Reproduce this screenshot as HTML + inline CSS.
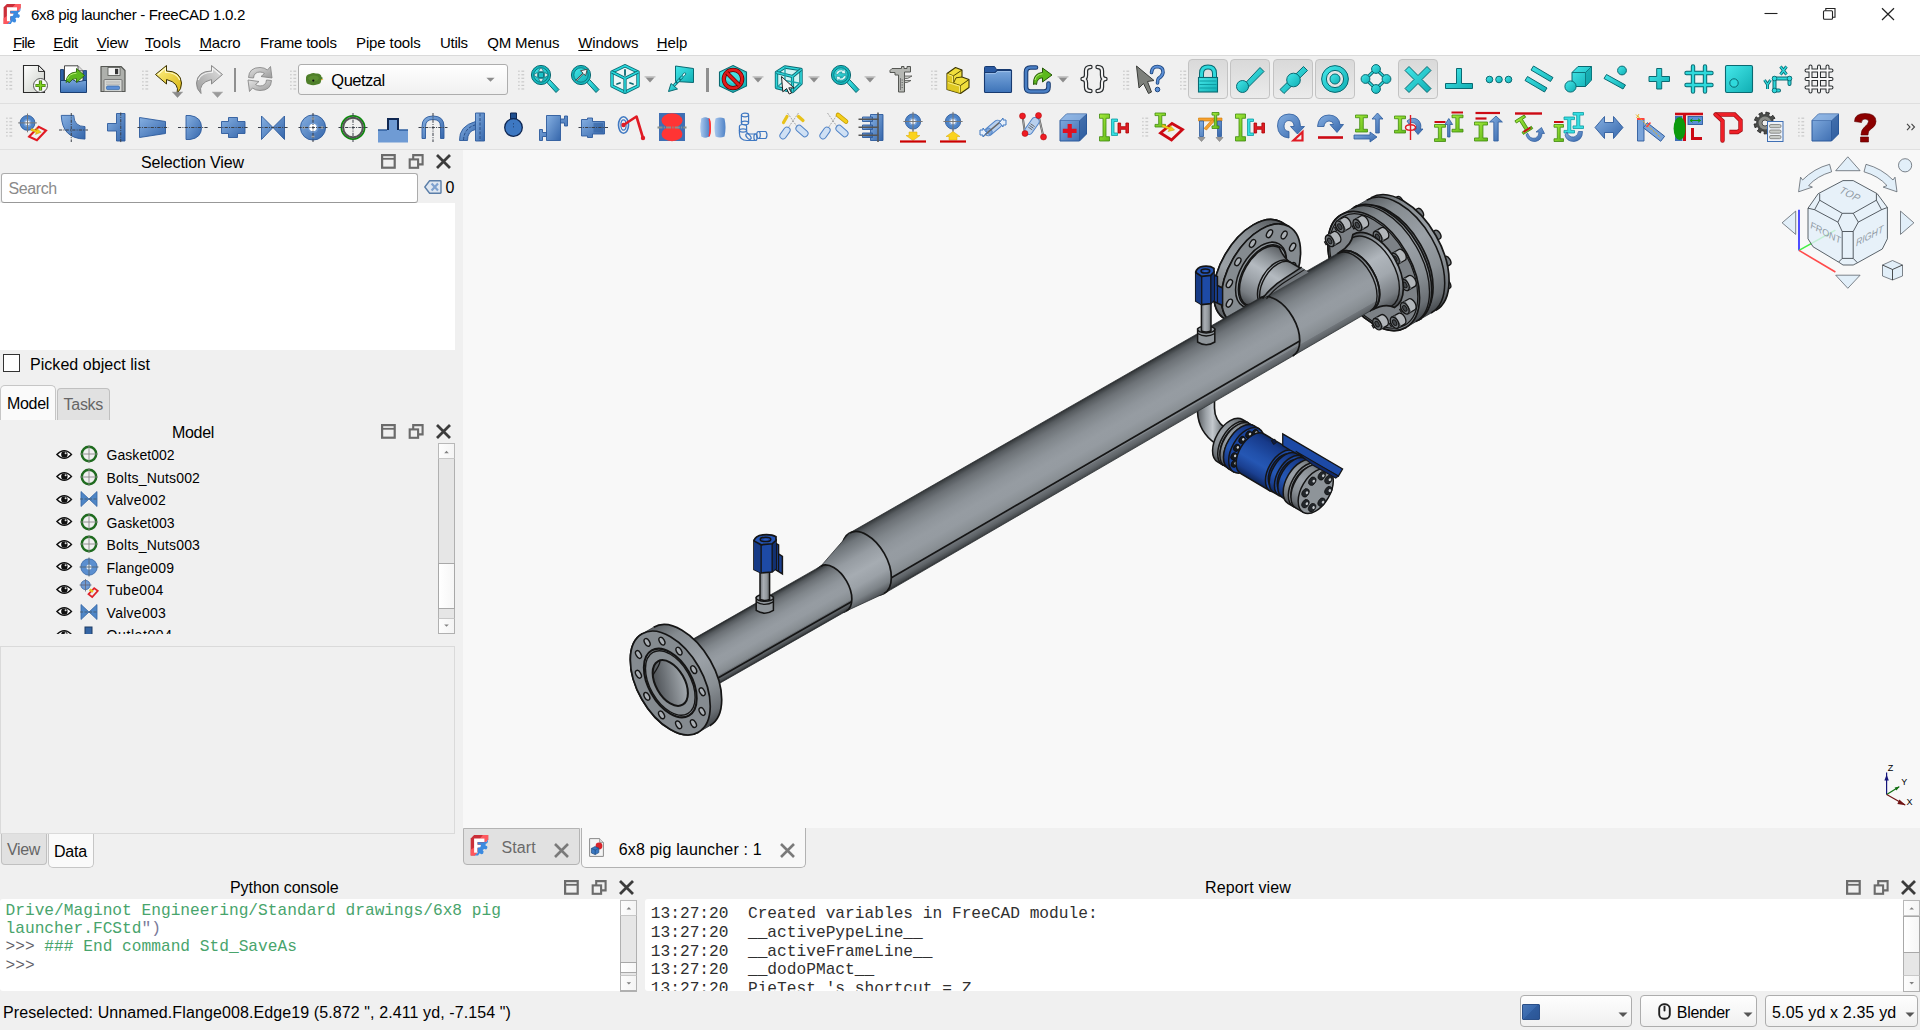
<!DOCTYPE html>
<html lang="en"><head><meta charset="utf-8"><title>6x8 pig launcher - FreeCAD 1.0.2</title>
<style>
html,body{margin:0;padding:0;}
body{width:1920px;height:1030px;overflow:hidden;background:#f0f0f0;position:relative;font-family:"Liberation Sans",sans-serif;}
.t{position:absolute;white-space:pre;}
.b{position:absolute;box-sizing:border-box;}
svg{position:absolute;overflow:visible;}
u{text-decoration:underline;text-underline-offset:2px;text-decoration-thickness:1px;}
</style></head><body>
<div class="b" style="left:0px;top:0px;width:1920px;height:55px;background:#fff;"></div>
<div class="b" style="left:0px;top:55px;width:1920px;height:1px;background:#dadada;"></div>
<svg style="left:0px;top:0px" width="24" height="28" viewBox="0 0 24 28">
<path d="M3.6 7.3L6.9 4H20.6V8L7.6 23.9H3.6Z" fill="#cb2f39"/>
<path d="M15.4 4H20.6V8.2L17 12.4V7.2H12.6Z" fill="#ff5a60"/>
<path d="M3.6 18.2L6.9 16V21L9.6 21.4 7.6 23.9H3.6Z" fill="#ff565c"/>
<path d="M6.9 7.3H17V10.8H10.2V13.4H14V16.4H10.2V21.2H6.9Z" fill="#fff"/>
<path d="M20.6 7.8L19.2 10.8 17.6 10.4 16.6 11 10.4 11V13.2H13.6L13 15.8 10.4 16.2V21.4L7.4 23.9H10.8L12.2 21.6 14 22.6 15.6 22.2 16.2 20 15.2 18.4 16.8 17.6 18.6 18 19.8 16.6 19.6 14.8 18 14 18.2 12.4 19.6 11.8 20.4 10.4Z" fill="#3b8ae0"/>
</svg>
<div class="t" id="title" style="left:31px;top:6.72px;font-size:15.1px;line-height:15.1px;font-family:'Liberation Sans',sans-serif;color:#000;letter-spacing:-0.339px;">6x8 pig launcher - FreeCAD 1.0.2</div>
<svg style="left:1750px;top:0" width="170" height="29" viewBox="0 0 170 29">
<path d="M14.5 13.5H27.5" stroke="#222" stroke-width="1.1"/>
<path d="M75.8 10.5V8.5H85V17.2H82.8" fill="none" stroke="#222" stroke-width="1.1"/>
<rect x="73.5" y="10.7" width="9" height="8.6" rx="1" fill="none" stroke="#222" stroke-width="1.1"/>
<path d="M132 8.3L144 20M144 8.3L132 20" stroke="#222" stroke-width="1.2"/>
</svg>
<div class="t" id="menu0" style="left:13px;top:34.60px;font-size:15px;line-height:15px;font-family:'Liberation Sans',sans-serif;color:#000;letter-spacing:-0.620px;"><u>F</u>ile</div>
<div class="t" id="menu1" style="left:53.3px;top:34.60px;font-size:15px;line-height:15px;font-family:'Liberation Sans',sans-serif;color:#000;letter-spacing:-0.291px;"><u>E</u>dit</div>
<div class="t" id="menu2" style="left:96.7px;top:34.60px;font-size:15px;line-height:15px;font-family:'Liberation Sans',sans-serif;color:#000;letter-spacing:-0.163px;"><u>V</u>iew</div>
<div class="t" id="menu3" style="left:145px;top:34.60px;font-size:15px;line-height:15px;font-family:'Liberation Sans',sans-serif;color:#000;letter-spacing:0.155px;"><u>T</u>ools</div>
<div class="t" id="menu4" style="left:199.5px;top:34.60px;font-size:15px;line-height:15px;font-family:'Liberation Sans',sans-serif;color:#000;letter-spacing:-0.138px;"><u>M</u>acro</div>
<div class="t" id="menu5" style="left:260px;top:34.60px;font-size:15px;line-height:15px;font-family:'Liberation Sans',sans-serif;color:#000;letter-spacing:-0.227px;">Frame tools</div>
<div class="t" id="menu6" style="left:356px;top:34.60px;font-size:15px;line-height:15px;font-family:'Liberation Sans',sans-serif;color:#000;letter-spacing:-0.118px;">Pipe tools</div>
<div class="t" id="menu7" style="left:440px;top:34.60px;font-size:15px;line-height:15px;font-family:'Liberation Sans',sans-serif;color:#000;letter-spacing:-0.296px;">Utils</div>
<div class="t" id="menu8" style="left:487.3px;top:34.60px;font-size:15px;line-height:15px;font-family:'Liberation Sans',sans-serif;color:#000;letter-spacing:-0.170px;">QM Menus</div>
<div class="t" id="menu9" style="left:578.3px;top:34.60px;font-size:15px;line-height:15px;font-family:'Liberation Sans',sans-serif;color:#000;letter-spacing:-0.125px;"><u>W</u>indows</div>
<div class="t" id="menu10" style="left:656.7px;top:34.60px;font-size:15px;line-height:15px;font-family:'Liberation Sans',sans-serif;color:#000;letter-spacing:-0.066px;"><u>H</u>elp</div>
<div class="b" style="left:0px;top:56px;width:1920px;height:47px;background:#f0f0f0;"></div>
<div class="b" style="left:0px;top:102.6px;width:1920px;height:2.2px;background:linear-gradient(#e6e6e6,#d6d6d6 60%,#e4e4e4);"></div>
<div class="b" style="left:0px;top:104px;width:1920px;height:45px;background:#f0f0f0;"></div>
<div class="b" style="left:0px;top:149px;width:1920px;height:1px;background:#e0e0e0;"></div>
<div class="b" style="left:463px;top:150px;width:1457px;height:678px;background:#f8f8f8;"></div>
<div class="t" id="selview" style="left:141px;top:155.46px;font-size:16px;line-height:16px;font-family:'Liberation Sans',sans-serif;color:#000;letter-spacing:-0.119px;">Selection View</div>
<svg style="left:381px;top:154px" width="72" height="16" viewBox="0 0 72 16"><rect x="1.1" y="1.1" width="12.6" height="12.6" fill="none" stroke="#6b6b6b" stroke-width="2.2"/><rect x="1.1" y="3.9" width="12.6" height="1.8" fill="#6b6b6b"/><path d="M32.2 5.2V1.1H41.6V10.4H37.8" fill="none" stroke="#6b6b6b" stroke-width="2.1"/><rect x="28.7" y="5.4" width="8.4" height="8.4" fill="none" stroke="#6b6b6b" stroke-width="2.1"/><path d="M56 1L69 14M69 1L56 14" fill="none" stroke="#3c3c3c" stroke-width="2.8"/></svg>
<div class="b" style="left:0.5px;top:173.4px;width:417px;height:29.2px;background:#fff;border:1.3px solid #acacac;border-bottom-color:#989898;border-radius:3px;"></div>
<div class="t" id="search" style="left:8.5px;top:180.76px;font-size:16px;line-height:16px;font-family:'Liberation Sans',sans-serif;color:#8a8a8a;letter-spacing:-0.416px;">Search</div>
<svg style="left:424px;top:180px" width="18" height="15" viewBox="0 0 18 15">
<path d="M5.6 0.8H16.4Q17 0.8 17 1.4V12.6Q17 13.2 16.4 13.2H5.6L0.8 7Z" fill="#dfe7f1" stroke="#5b7ea8" stroke-width="1.4" stroke-linejoin="round"/>
<path d="M7.6 3.6L14 10.4M14 3.6L7.6 10.4" stroke="#7fa2cf" stroke-width="2.2"/>
</svg>
<div class="t" id="selcount" style="left:445.5px;top:180.16px;font-size:16px;line-height:16px;font-family:'Liberation Sans',sans-serif;color:#000;letter-spacing:-0.906px;">0</div>
<div class="b" style="left:0px;top:203px;width:455px;height:147px;background:#fff;"></div>
<div class="b" style="left:2.5px;top:354px;width:17.5px;height:17.5px;background:#fff;border:1.6px solid #333;"></div>
<div class="t" id="picked" style="left:30px;top:357.16px;font-size:16px;line-height:16px;font-family:'Liberation Sans',sans-serif;color:#000;letter-spacing:0.046px;">Picked object list</div>
<div class="b" style="left:57px;top:388px;width:53px;height:32px;background:#e1e1e1;border:1px solid #c0c0c0;border-bottom:none;border-radius:4px 4px 0 0;"></div>
<div class="b" style="left:0px;top:384.5px;width:55.5px;height:35.5px;background:#fafafa;border:1px solid #c6c6c6;border-bottom:none;border-radius:5px 5px 0 0;"></div>
<div class="t" id="tabmodel" style="left:7px;top:396.16px;font-size:16px;line-height:16px;font-family:'Liberation Sans',sans-serif;color:#000;letter-spacing:-0.316px;">Model</div>
<div class="t" id="tabtasks" style="left:63.6px;top:397.16px;font-size:16px;line-height:16px;font-family:'Liberation Sans',sans-serif;color:#666;letter-spacing:-0.301px;">Tasks</div>
<div class="t" id="modeltitle" style="left:172px;top:424.96px;font-size:16px;line-height:16px;font-family:'Liberation Sans',sans-serif;color:#000;letter-spacing:-0.316px;">Model</div>
<svg style="left:381px;top:424px" width="72" height="16" viewBox="0 0 72 16"><rect x="1.1" y="1.1" width="12.6" height="12.6" fill="none" stroke="#6b6b6b" stroke-width="2.2"/><rect x="1.1" y="3.9" width="12.6" height="1.8" fill="#6b6b6b"/><path d="M32.2 5.2V1.1H41.6V10.4H37.8" fill="none" stroke="#6b6b6b" stroke-width="2.1"/><rect x="28.7" y="5.4" width="8.4" height="8.4" fill="none" stroke="#6b6b6b" stroke-width="2.1"/><path d="M56 1L69 14M69 1L56 14" fill="none" stroke="#3c3c3c" stroke-width="2.8"/></svg><div class="b" style="left:0;top:443px;width:438px;height:191px;overflow:hidden;">
<svg style="left:55.8px;top:5.699999999999989px" width="16.4" height="11" viewBox="0 0 18 12"><path d="M1 6Q9 -2.6 17 6Q9 14.6 1 6Z" fill="#fff" stroke="#111" stroke-width="1.5"/><circle cx="9.2" cy="6" r="3.5" fill="#111"/><circle cx="10.6" cy="4.6" r="1.1" fill="#ddd"/></svg>
<svg style="left:79px;top:1.1999999999999886px" width="20" height="20" viewBox="0 0 20 20"><circle cx="10" cy="10" r="7.2" fill="#f0f0f0" stroke="#1f6b1f" stroke-width="2.4"/><path d="M10 1V19M1 10H19" stroke="#888" stroke-width="0.9"/></svg>
<div class="t" id="tree0" style="left:106.6px;top:5.15px;font-size:14px;line-height:14px;font-family:'Liberation Sans',sans-serif;color:#000;letter-spacing:0.031px;">Gasket002</div>
<svg style="left:55.8px;top:28.19999999999999px" width="16.4" height="11" viewBox="0 0 18 12"><path d="M1 6Q9 -2.6 17 6Q9 14.6 1 6Z" fill="#fff" stroke="#111" stroke-width="1.5"/><circle cx="9.2" cy="6" r="3.5" fill="#111"/><circle cx="10.6" cy="4.6" r="1.1" fill="#ddd"/></svg>
<svg style="left:79px;top:23.69999999999999px" width="20" height="20" viewBox="0 0 20 20"><circle cx="10" cy="10" r="7.2" fill="#f0f0f0" stroke="#1f6b1f" stroke-width="2.4"/><path d="M10 1V19M1 10H19" stroke="#888" stroke-width="0.9"/></svg>
<div class="t" id="tree1" style="left:106.6px;top:27.65px;font-size:14px;line-height:14px;font-family:'Liberation Sans',sans-serif;color:#000;letter-spacing:0.188px;">Bolts_Nuts002</div>
<svg style="left:55.8px;top:50.69999999999999px" width="16.4" height="11" viewBox="0 0 18 12"><path d="M1 6Q9 -2.6 17 6Q9 14.6 1 6Z" fill="#fff" stroke="#111" stroke-width="1.5"/><circle cx="9.2" cy="6" r="3.5" fill="#111"/><circle cx="10.6" cy="4.6" r="1.1" fill="#ddd"/></svg>
<svg style="left:79px;top:46.19999999999999px" width="20" height="20" viewBox="0 0 20 20"><path d="M2 2.5V17.5L10 10ZM18 2.5V17.5L10 10Z" fill="#4f86c6" stroke="#3465a4" stroke-width="0.8"/><path d="M1 10H19" stroke="#456" stroke-width="0.8" stroke-dasharray="3 1.5"/></svg>
<div class="t" id="tree2" style="left:106.6px;top:50.15px;font-size:14px;line-height:14px;font-family:'Liberation Sans',sans-serif;color:#000;letter-spacing:0.270px;">Valve002</div>
<svg style="left:55.8px;top:73.20000000000005px" width="16.4" height="11" viewBox="0 0 18 12"><path d="M1 6Q9 -2.6 17 6Q9 14.6 1 6Z" fill="#fff" stroke="#111" stroke-width="1.5"/><circle cx="9.2" cy="6" r="3.5" fill="#111"/><circle cx="10.6" cy="4.6" r="1.1" fill="#ddd"/></svg>
<svg style="left:79px;top:68.70000000000005px" width="20" height="20" viewBox="0 0 20 20"><circle cx="10" cy="10" r="7.2" fill="#f0f0f0" stroke="#1f6b1f" stroke-width="2.4"/><path d="M10 1V19M1 10H19" stroke="#888" stroke-width="0.9"/></svg>
<div class="t" id="tree3" style="left:106.6px;top:72.65px;font-size:14px;line-height:14px;font-family:'Liberation Sans',sans-serif;color:#000;letter-spacing:0.031px;">Gasket003</div>
<svg style="left:55.8px;top:95.70000000000005px" width="16.4" height="11" viewBox="0 0 18 12"><path d="M1 6Q9 -2.6 17 6Q9 14.6 1 6Z" fill="#fff" stroke="#111" stroke-width="1.5"/><circle cx="9.2" cy="6" r="3.5" fill="#111"/><circle cx="10.6" cy="4.6" r="1.1" fill="#ddd"/></svg>
<svg style="left:79px;top:91.20000000000005px" width="20" height="20" viewBox="0 0 20 20"><circle cx="10" cy="10" r="7.2" fill="#f0f0f0" stroke="#1f6b1f" stroke-width="2.4"/><path d="M10 1V19M1 10H19" stroke="#888" stroke-width="0.9"/></svg>
<div class="t" id="tree4" style="left:106.6px;top:95.15px;font-size:14px;line-height:14px;font-family:'Liberation Sans',sans-serif;color:#000;letter-spacing:0.188px;">Bolts_Nuts003</div>
<svg style="left:55.8px;top:118.20000000000005px" width="16.4" height="11" viewBox="0 0 18 12"><path d="M1 6Q9 -2.6 17 6Q9 14.6 1 6Z" fill="#fff" stroke="#111" stroke-width="1.5"/><circle cx="9.2" cy="6" r="3.5" fill="#111"/><circle cx="10.6" cy="4.6" r="1.1" fill="#ddd"/></svg>
<svg style="left:79px;top:113.70000000000005px" width="20" height="20" viewBox="0 0 20 20"><circle cx="10" cy="10" r="8.2" fill="#5b8fd0" stroke="#3465a4" stroke-width="0.8"/><circle cx="10" cy="10" r="2.6" fill="#e8eef6"/><path d="M10 0.5V19.5M0.5 10H19.5" stroke="#567" stroke-width="0.9"/></svg>
<div class="t" id="tree5" style="left:106.6px;top:117.65px;font-size:14px;line-height:14px;font-family:'Liberation Sans',sans-serif;color:#000;letter-spacing:0.148px;">Flange009</div>
<svg style="left:55.8px;top:140.70000000000005px" width="16.4" height="11" viewBox="0 0 18 12"><path d="M1 6Q9 -2.6 17 6Q9 14.6 1 6Z" fill="#fff" stroke="#111" stroke-width="1.5"/><circle cx="9.2" cy="6" r="3.5" fill="#111"/><circle cx="10.6" cy="4.6" r="1.1" fill="#ddd"/></svg>
<svg style="left:79px;top:136.20000000000005px" width="20" height="20" viewBox="0 0 20 20"><circle cx="6.5" cy="6" r="4.6" fill="#6f9bd4" stroke="#3465a4" stroke-width="0.8"/><path d="M6.5 0V12.5M0.5 6H12.5" stroke="#667" stroke-width="0.8"/><path d="M9.5 15.2L15.2 9.2 18.8 11.8 13.2 18Z" fill="none" stroke="#e0222a" stroke-width="1.7"/><path d="M10.6 10.4L14 12.8" stroke="#e8c21a" stroke-width="2.4"/></svg>
<div class="t" id="tree6" style="left:106.6px;top:140.15px;font-size:14px;line-height:14px;font-family:'Liberation Sans',sans-serif;color:#000;letter-spacing:0.321px;">Tube004</div>
<svg style="left:55.8px;top:163.20000000000005px" width="16.4" height="11" viewBox="0 0 18 12"><path d="M1 6Q9 -2.6 17 6Q9 14.6 1 6Z" fill="#fff" stroke="#111" stroke-width="1.5"/><circle cx="9.2" cy="6" r="3.5" fill="#111"/><circle cx="10.6" cy="4.6" r="1.1" fill="#ddd"/></svg>
<svg style="left:79px;top:158.70000000000005px" width="20" height="20" viewBox="0 0 20 20"><path d="M2 2.5V17.5L10 10ZM18 2.5V17.5L10 10Z" fill="#4f86c6" stroke="#3465a4" stroke-width="0.8"/><path d="M1 10H19" stroke="#456" stroke-width="0.8" stroke-dasharray="3 1.5"/></svg>
<div class="t" id="tree7" style="left:106.6px;top:162.65px;font-size:14px;line-height:14px;font-family:'Liberation Sans',sans-serif;color:#000;letter-spacing:0.270px;">Valve003</div>
<svg style="left:55.8px;top:185.70000000000005px" width="16.4" height="11" viewBox="0 0 18 12"><path d="M1 6Q9 -2.6 17 6Q9 14.6 1 6Z" fill="#fff" stroke="#111" stroke-width="1.5"/><circle cx="9.2" cy="6" r="3.5" fill="#111"/><circle cx="10.6" cy="4.6" r="1.1" fill="#ddd"/></svg>
<svg style="left:79px;top:181.20000000000005px" width="20" height="20" viewBox="0 0 20 20"><rect x="6" y="3" width="7" height="10" fill="#3465a4" stroke="#1d3b63" stroke-width="1"/></svg>
<div class="t" id="tree8" style="left:106.6px;top:185.15px;font-size:14px;line-height:14px;font-family:'Liberation Sans',sans-serif;color:#000;letter-spacing:0.587px;">Outlet004</div>
</div>
<div class="b" style="left:438px;top:443.4px;width:17px;height:190.2px;background:#e6e6e6;border:1px solid #b0b0b0;"></div><div class="b" style="left:438px;top:443.4px;width:17px;height:16px;background:linear-gradient(90deg,#fdfdfd,#f4f4f4);border:1px solid #b8b8b8;border-bottom-color:#c8c8c8;"></div><div class="b" style="left:438px;top:617.5999999999999px;width:17px;height:16px;background:linear-gradient(90deg,#fdfdfd,#f4f4f4);border:1px solid #b0b0b0;border-top-color:#c8c8c8;"></div><div class="b" style="left:438px;top:563.3px;width:17px;height:46.10000000000002px;background:linear-gradient(90deg,#ffffff,#f6f6f6);border:1px solid #a8a8a8;"></div><svg style="left:0;top:0" width="1" height="1"><path d="M444.2 453.2L446.5 450.79999999999995L448.8 453.2Z" fill="#808080"/><path d="M444.2 624.3999999999999L446.5 626.8L448.8 624.3999999999999Z" fill="#808080"/></svg>
<div class="b" style="left:0px;top:645.5px;width:455px;height:188.5px;background:#f0f0f0;border:1px solid #dadada;"></div>
<div class="b" style="left:0.5px;top:834px;width:46px;height:30.5px;background:#e1e1e1;border:1px solid #c0c0c0;border-top:none;border-radius:0 0 4px 4px;"></div>
<div class="b" style="left:48px;top:833.5px;width:45.5px;height:34.5px;background:#fafafa;border:1px solid #c6c6c6;border-top:none;border-radius:0 0 5px 5px;"></div>
<div class="t" id="tabview" style="left:7px;top:841.66px;font-size:16px;line-height:16px;font-family:'Liberation Sans',sans-serif;color:#666;letter-spacing:-0.348px;">View</div>
<div class="t" id="tabdata" style="left:54px;top:844.16px;font-size:16px;line-height:16px;font-family:'Liberation Sans',sans-serif;color:#000;letter-spacing:-0.203px;">Data</div><div class="b" style="left:463.3px;top:828px;width:116.5px;height:36.6px;background:#e1e1e1;border:1px solid #b4b4b4;border-radius:0 0 4px 4px;"></div>
<div class="b" style="left:580.8px;top:828px;width:224.8px;height:40.3px;background:#f8f8f8;border:1px solid #b2b2b2;border-top:none;border-radius:0 0 5px 5px;"></div>
<svg style="left:466.7px;top:830.6px" width="24.7" height="28.8" viewBox="0 0 24 28">
<path d="M3.6 7.3L6.9 4H20.6V8L7.6 23.9H3.6Z" fill="#cb2f39"/>
<path d="M15.4 4H20.6V8.2L17 12.4V7.2H12.6Z" fill="#ff5a60"/>
<path d="M3.6 18.2L6.9 16V21L9.6 21.4 7.6 23.9H3.6Z" fill="#ff565c"/>
<path d="M6.9 7.3H17V10.8H10.2V13.4H14V16.4H10.2V21.2H6.9Z" fill="#fff"/>
<path d="M20.6 7.8L19.2 10.8 17.6 10.4 16.6 11 10.4 11V13.2H13.6L13 15.8 10.4 16.2V21.4L7.4 23.9H10.8L12.2 21.6 14 22.6 15.6 22.2 16.2 20 15.2 18.4 16.8 17.6 18.6 18 19.8 16.6 19.6 14.8 18 14 18.2 12.4 19.6 11.8 20.4 10.4Z" fill="#3b8ae0"/>
</svg>
<div class="t" id="tabstart" style="left:501.5px;top:840.16px;font-size:16px;line-height:16px;font-family:'Liberation Sans',sans-serif;color:#6a6a6a;letter-spacing:0.102px;">Start</div>
<svg style="left:554px;top:842.7px" width="15" height="15" viewBox="0 0 15 15"><path d="M1 1L14 14M14 1L1 14" stroke="#7a7a7a" stroke-width="2.6"/></svg>
<svg style="left:589px;top:838px" width="15" height="19" viewBox="0 0 15 19">
<path d="M0.6 0.6H10.6L14.4 4.4V18.4H0.6Z" fill="#f4f4f4" stroke="#8a8a8a" stroke-width="1"/>
<path d="M10.6 0.6V4.4H14.4" fill="#ddd" stroke="#8a8a8a" stroke-width="0.8"/>
<circle cx="10" cy="8" r="3.4" fill="#d8232a"/>
<path d="M2.4 10.4L6 8.6 9.8 10.2V14.6L6.2 16.6 2.4 15Z" fill="#3a78c2" stroke="#1f4a80" stroke-width="0.7"/>
<path d="M2.4 10.4L6.2 12 9.8 10.2M6.2 12V16.6" fill="none" stroke="#1f4a80" stroke-width="0.7"/>
</svg>
<div class="t" id="tabdoc" style="left:618.7px;top:842.36px;font-size:16px;line-height:16px;font-family:'Liberation Sans',sans-serif;color:#000;letter-spacing:0.177px;">6x8 pig launcher : 1</div>
<svg style="left:780px;top:842.7px" width="15" height="15" viewBox="0 0 15 15"><path d="M1 1L14 14M14 1L1 14" stroke="#7a7a7a" stroke-width="2.6"/></svg>
<div class="t" id="pytitle" style="left:230px;top:880.46px;font-size:16px;line-height:16px;font-family:'Liberation Sans',sans-serif;color:#000;letter-spacing:-0.065px;">Python console</div>
<svg style="left:564.4px;top:880.2px" width="72" height="16" viewBox="0 0 72 16"><rect x="1.1" y="1.1" width="12.6" height="12.6" fill="none" stroke="#6b6b6b" stroke-width="2.2"/><rect x="1.1" y="3.9" width="12.6" height="1.8" fill="#6b6b6b"/><path d="M32.2 5.2V1.1H41.6V10.4H37.8" fill="none" stroke="#6b6b6b" stroke-width="2.1"/><rect x="28.7" y="5.4" width="8.4" height="8.4" fill="none" stroke="#6b6b6b" stroke-width="2.1"/><path d="M56 1L69 14M69 1L56 14" fill="none" stroke="#3c3c3c" stroke-width="2.8"/></svg>
<div class="b" style="left:0px;top:899.3px;width:620px;height:92px;background:#fff;border-radius:3px 0 0 3px;"></div>
<div class="t" id="py0" style="left:5.5px;top:902.52px;font-size:16.2px;line-height:16.2px;font-family:'Liberation Mono',monospace;color:#48a46c;letter-spacing:0.000px;">Drive/Maginot Engineering/Standard drawings/6x8 pig</div>
<div class="t" id="py1" style="left:5.5px;top:921.32px;font-size:16.2px;line-height:16.2px;font-family:'Liberation Mono',monospace;color:#48a46c;letter-spacing:0.000px;">launcher.FCStd<span style="color:#7a7a9a">")</span></div>
<div class="t" id="py2" style="left:5.5px;top:939.12px;font-size:16.2px;line-height:16.2px;font-family:'Liberation Mono',monospace;color:#48a46c;letter-spacing:0.000px;"><span style="color:#62626a">&gt;&gt;&gt;</span> ### End command Std_SaveAs</div>
<div class="t" id="py3" style="left:5.5px;top:957.92px;font-size:16.2px;line-height:16.2px;font-family:'Liberation Mono',monospace;color:#62626a;letter-spacing:0.000px;">&gt;&gt;&gt;</div>
<div class="b" style="left:620.2px;top:899.5px;width:17.3px;height:92px;background:#e6e6e6;border:1px solid #b0b0b0;"></div><div class="b" style="left:620.2px;top:899.5px;width:17.3px;height:16.3px;background:linear-gradient(90deg,#fdfdfd,#f4f4f4);border:1px solid #b8b8b8;border-bottom-color:#c8c8c8;"></div><div class="b" style="left:620.2px;top:975.2px;width:17.3px;height:16.3px;background:linear-gradient(90deg,#fdfdfd,#f4f4f4);border:1px solid #b0b0b0;border-top-color:#c8c8c8;"></div><div class="b" style="left:620.2px;top:961.7px;width:17.3px;height:11.299999999999955px;background:linear-gradient(90deg,#ffffff,#f6f6f6);border:1px solid #a8a8a8;"></div><svg style="left:0;top:0" width="1" height="1"><path d="M626.5500000000001 909.4499999999999L628.85 907.05L631.15 909.4499999999999Z" fill="#808080"/><path d="M626.5500000000001 982.15L628.85 984.5500000000001L631.15 982.15Z" fill="#808080"/></svg>
<div class="t" id="rptitle" style="left:1205px;top:880.46px;font-size:16px;line-height:16px;font-family:'Liberation Sans',sans-serif;color:#000;letter-spacing:0.138px;">Report view</div>
<svg style="left:1846.3px;top:880.2px" width="72" height="16" viewBox="0 0 72 16"><rect x="1.1" y="1.1" width="12.6" height="12.6" fill="none" stroke="#6b6b6b" stroke-width="2.2"/><rect x="1.1" y="3.9" width="12.6" height="1.8" fill="#6b6b6b"/><path d="M32.2 5.2V1.1H41.6V10.4H37.8" fill="none" stroke="#6b6b6b" stroke-width="2.1"/><rect x="28.7" y="5.4" width="8.4" height="8.4" fill="none" stroke="#6b6b6b" stroke-width="2.1"/><path d="M56 1L69 14M69 1L56 14" fill="none" stroke="#3c3c3c" stroke-width="2.8"/></svg>
<div class="b" style="left:645.2px;top:899.3px;width:1258px;height:92px;background:#fff;border-radius:3px 0 0 3px;overflow:hidden;">
<div class="t" id="rp0" style="left:5.6px;top:7.02px;font-size:16.2px;line-height:16.2px;font-family:'Liberation Mono',monospace;color:#303030;letter-spacing:0.000px;">13:27:20  Created variables in FreeCAD module:</div>
<div class="t" id="rp1" style="left:5.6px;top:25.72px;font-size:16.2px;line-height:16.2px;font-family:'Liberation Mono',monospace;color:#303030;letter-spacing:0.000px;">13:27:20  __activePypeLine__</div>
<div class="t" id="rp2" style="left:5.6px;top:44.42px;font-size:16.2px;line-height:16.2px;font-family:'Liberation Mono',monospace;color:#303030;letter-spacing:0.000px;">13:27:20  __activeFrameLine__</div>
<div class="t" id="rp3" style="left:5.6px;top:63.12px;font-size:16.2px;line-height:16.2px;font-family:'Liberation Mono',monospace;color:#303030;letter-spacing:0.000px;">13:27:20  __dodoPMact__</div>
<div class="t" id="rp4" style="left:5.6px;top:81.82px;font-size:16.2px;line-height:16.2px;font-family:'Liberation Mono',monospace;color:#303030;letter-spacing:0.000px;">13:27:20  PieTest 's shortcut = Z</div>
</div>
<div class="b" style="left:1903.2px;top:899.5px;width:17px;height:92px;background:#e6e6e6;border:1px solid #b0b0b0;"></div><div class="b" style="left:1903.2px;top:899.5px;width:17px;height:16.5px;background:linear-gradient(90deg,#fdfdfd,#f4f4f4);border:1px solid #b8b8b8;border-bottom-color:#c8c8c8;"></div><div class="b" style="left:1903.2px;top:975.0px;width:17px;height:16.5px;background:linear-gradient(90deg,#fdfdfd,#f4f4f4);border:1px solid #b0b0b0;border-top-color:#c8c8c8;"></div><div class="b" style="left:1903.2px;top:916px;width:17px;height:37px;background:linear-gradient(90deg,#ffffff,#f6f6f6);border:1px solid #a8a8a8;"></div><svg style="left:0;top:0" width="1" height="1"><path d="M1909.4 909.55L1911.7 907.15L1914.0 909.55Z" fill="#808080"/><path d="M1909.4 982.05L1911.7 984.45L1914.0 982.05Z" fill="#808080"/></svg>
<div class="t" id="status" style="left:3px;top:1004.66px;font-size:16px;line-height:16px;font-family:'Liberation Sans',sans-serif;color:#000;letter-spacing:0.102px;">Preselected: Unnamed.Flange008.Edge19 (5.872 ", 2.411 yd, -7.154 ")</div>
<div class="b" style="left:1520.3px;top:995.4px;width:111.7px;height:31.8px;background:linear-gradient(#fefefe,#f0f0f0);border:1px solid #adadad;border-radius:4px;"></div>
<div class="b" style="left:1640.2px;top:995.4px;width:116.8px;height:31.8px;background:linear-gradient(#fefefe,#f0f0f0);border:1px solid #adadad;border-radius:4px;"></div>
<div class="b" style="left:1765px;top:995.4px;width:153px;height:31.8px;background:linear-gradient(#fefefe,#f0f0f0);border:1px solid #adadad;border-radius:4px;"></div>
<div class="b" style="left:1522.3px;top:1004px;width:17.6px;height:16.2px;background:linear-gradient(135deg,#4a78b8 0%,#3868ac 50%,#2f5c9e 50%,#2a5596 100%);border:1px solid #2a4f88;border-radius:1px;"></div>
<svg style="left:0;top:0" width="1" height="1"><path d="M1618.5 1012.5H1627.5L1623 1017Z" fill="#555"/><path d="M1743.5 1012.5H1752.5L1748 1017Z" fill="#555"/><path d="M1905.5 1012.5H1914.5L1910 1017Z" fill="#555"/></svg>
<svg style="left:1657.5px;top:1003px" width="13" height="17" viewBox="0 0 13 17"><rect x="1.2" y="1.2" width="10.6" height="14.6" rx="4.6" fill="none" stroke="#222" stroke-width="1.9"/><path d="M6.5 3.6V7.6" stroke="#222" stroke-width="1.9" stroke-linecap="round"/></svg>
<div class="t" id="blender" style="left:1676.8px;top:1004.86px;font-size:16px;line-height:16px;font-family:'Liberation Sans',sans-serif;color:#000;letter-spacing:-0.308px;">Blender</div>
<div class="t" id="dims" style="left:1772px;top:1004.86px;font-size:16px;line-height:16px;font-family:'Liberation Sans',sans-serif;color:#000;letter-spacing:0.149px;">5.05 yd x 2.35 yd</div>
<svg width="0" height="0" style="left:0;top:0"><defs><linearGradient id="ib" x1="0" y1="0" x2="1" y2="1"><stop offset="0" stop-color="#86b0e2"/><stop offset="1" stop-color="#3566ab"/></linearGradient><linearGradient id="ib2" x1="0" y1="0" x2="1" y2="0"><stop offset="0" stop-color="#a9c8ee"/><stop offset="1" stop-color="#4f82c6"/></linearGradient><linearGradient id="ic" x1="0" y1="0" x2="1" y2="1"><stop offset="0" stop-color="#45e8ea"/><stop offset="1" stop-color="#10aeb3"/></linearGradient><linearGradient id="ig" x1="0" y1="0" x2="1" y2="1"><stop offset="0" stop-color="#a4ea3c"/><stop offset="1" stop-color="#62b81a"/></linearGradient><linearGradient id="iy" x1="0" y1="0" x2="1" y2="1"><stop offset="0" stop-color="#fff38a"/><stop offset="1" stop-color="#d9b40c"/></linearGradient><linearGradient id="igy" x1="0" y1="0" x2="1" y2="1"><stop offset="0" stop-color="#e4e4e4"/><stop offset="1" stop-color="#9a9a9a"/></linearGradient><linearGradient id="idoc" x1="0" y1="0" x2="1" y2="1"><stop offset="0" stop-color="#ffffff"/><stop offset="1" stop-color="#c9cdc6"/></linearGradient><linearGradient id="ifold" x1="0" y1="0" x2="0" y2="1"><stop offset="0" stop-color="#7aa7dc"/><stop offset="1" stop-color="#3d73b8"/></linearGradient><linearGradient id="ibtn" x1="0" y1="0" x2="0" y2="1"><stop offset="0" stop-color="#dadada"/><stop offset="1" stop-color="#ebebeb"/></linearGradient><linearGradient id="icb" x1="0" y1="0" x2="0" y2="1"><stop offset="0" stop-color="#ffffff"/><stop offset="1" stop-color="#efefef"/></linearGradient></defs></svg>
<svg style="left:6px;top:69.5px" width="7" height="20" viewBox="0 0 7 20"><rect x="0.2" y="0.60" width="1.4" height="1.2" fill="#c4c4c4"/><rect x="3.4" y="0.60" width="2.8" height="1.2" fill="#c9c9c9"/><rect x="0.2" y="4.15" width="1.4" height="1.2" fill="#c4c4c4"/><rect x="3.4" y="4.15" width="2.8" height="1.2" fill="#c9c9c9"/><rect x="0.2" y="7.70" width="1.4" height="1.2" fill="#c4c4c4"/><rect x="3.4" y="7.70" width="2.8" height="1.2" fill="#c9c9c9"/><rect x="0.2" y="11.25" width="1.4" height="1.2" fill="#c4c4c4"/><rect x="3.4" y="11.25" width="2.8" height="1.2" fill="#c9c9c9"/><rect x="0.2" y="14.80" width="1.4" height="1.2" fill="#c4c4c4"/><rect x="3.4" y="14.80" width="2.8" height="1.2" fill="#c9c9c9"/><rect x="0.2" y="18.35" width="1.4" height="1.2" fill="#c4c4c4"/><rect x="3.4" y="18.35" width="2.8" height="1.2" fill="#c9c9c9"/></svg>
<svg style="left:142px;top:69.5px" width="7" height="20" viewBox="0 0 7 20"><rect x="0.2" y="0.60" width="1.4" height="1.2" fill="#c4c4c4"/><rect x="3.4" y="0.60" width="2.8" height="1.2" fill="#c9c9c9"/><rect x="0.2" y="4.15" width="1.4" height="1.2" fill="#c4c4c4"/><rect x="3.4" y="4.15" width="2.8" height="1.2" fill="#c9c9c9"/><rect x="0.2" y="7.70" width="1.4" height="1.2" fill="#c4c4c4"/><rect x="3.4" y="7.70" width="2.8" height="1.2" fill="#c9c9c9"/><rect x="0.2" y="11.25" width="1.4" height="1.2" fill="#c4c4c4"/><rect x="3.4" y="11.25" width="2.8" height="1.2" fill="#c9c9c9"/><rect x="0.2" y="14.80" width="1.4" height="1.2" fill="#c4c4c4"/><rect x="3.4" y="14.80" width="2.8" height="1.2" fill="#c9c9c9"/><rect x="0.2" y="18.35" width="1.4" height="1.2" fill="#c4c4c4"/><rect x="3.4" y="18.35" width="2.8" height="1.2" fill="#c9c9c9"/></svg>
<svg style="left:290px;top:69.5px" width="7" height="20" viewBox="0 0 7 20"><rect x="0.2" y="0.60" width="1.4" height="1.2" fill="#c4c4c4"/><rect x="3.4" y="0.60" width="2.8" height="1.2" fill="#c9c9c9"/><rect x="0.2" y="4.15" width="1.4" height="1.2" fill="#c4c4c4"/><rect x="3.4" y="4.15" width="2.8" height="1.2" fill="#c9c9c9"/><rect x="0.2" y="7.70" width="1.4" height="1.2" fill="#c4c4c4"/><rect x="3.4" y="7.70" width="2.8" height="1.2" fill="#c9c9c9"/><rect x="0.2" y="11.25" width="1.4" height="1.2" fill="#c4c4c4"/><rect x="3.4" y="11.25" width="2.8" height="1.2" fill="#c9c9c9"/><rect x="0.2" y="14.80" width="1.4" height="1.2" fill="#c4c4c4"/><rect x="3.4" y="14.80" width="2.8" height="1.2" fill="#c9c9c9"/><rect x="0.2" y="18.35" width="1.4" height="1.2" fill="#c4c4c4"/><rect x="3.4" y="18.35" width="2.8" height="1.2" fill="#c9c9c9"/></svg>
<svg style="left:518px;top:69.5px" width="7" height="20" viewBox="0 0 7 20"><rect x="0.2" y="0.60" width="1.4" height="1.2" fill="#c4c4c4"/><rect x="3.4" y="0.60" width="2.8" height="1.2" fill="#c9c9c9"/><rect x="0.2" y="4.15" width="1.4" height="1.2" fill="#c4c4c4"/><rect x="3.4" y="4.15" width="2.8" height="1.2" fill="#c9c9c9"/><rect x="0.2" y="7.70" width="1.4" height="1.2" fill="#c4c4c4"/><rect x="3.4" y="7.70" width="2.8" height="1.2" fill="#c9c9c9"/><rect x="0.2" y="11.25" width="1.4" height="1.2" fill="#c4c4c4"/><rect x="3.4" y="11.25" width="2.8" height="1.2" fill="#c9c9c9"/><rect x="0.2" y="14.80" width="1.4" height="1.2" fill="#c4c4c4"/><rect x="3.4" y="14.80" width="2.8" height="1.2" fill="#c9c9c9"/><rect x="0.2" y="18.35" width="1.4" height="1.2" fill="#c4c4c4"/><rect x="3.4" y="18.35" width="2.8" height="1.2" fill="#c9c9c9"/></svg>
<svg style="left:931px;top:69.5px" width="7" height="20" viewBox="0 0 7 20"><rect x="0.2" y="0.60" width="1.4" height="1.2" fill="#c4c4c4"/><rect x="3.4" y="0.60" width="2.8" height="1.2" fill="#c9c9c9"/><rect x="0.2" y="4.15" width="1.4" height="1.2" fill="#c4c4c4"/><rect x="3.4" y="4.15" width="2.8" height="1.2" fill="#c9c9c9"/><rect x="0.2" y="7.70" width="1.4" height="1.2" fill="#c4c4c4"/><rect x="3.4" y="7.70" width="2.8" height="1.2" fill="#c9c9c9"/><rect x="0.2" y="11.25" width="1.4" height="1.2" fill="#c4c4c4"/><rect x="3.4" y="11.25" width="2.8" height="1.2" fill="#c9c9c9"/><rect x="0.2" y="14.80" width="1.4" height="1.2" fill="#c4c4c4"/><rect x="3.4" y="14.80" width="2.8" height="1.2" fill="#c9c9c9"/><rect x="0.2" y="18.35" width="1.4" height="1.2" fill="#c4c4c4"/><rect x="3.4" y="18.35" width="2.8" height="1.2" fill="#c9c9c9"/></svg>
<svg style="left:1123px;top:69.5px" width="7" height="20" viewBox="0 0 7 20"><rect x="0.2" y="0.60" width="1.4" height="1.2" fill="#c4c4c4"/><rect x="3.4" y="0.60" width="2.8" height="1.2" fill="#c9c9c9"/><rect x="0.2" y="4.15" width="1.4" height="1.2" fill="#c4c4c4"/><rect x="3.4" y="4.15" width="2.8" height="1.2" fill="#c9c9c9"/><rect x="0.2" y="7.70" width="1.4" height="1.2" fill="#c4c4c4"/><rect x="3.4" y="7.70" width="2.8" height="1.2" fill="#c9c9c9"/><rect x="0.2" y="11.25" width="1.4" height="1.2" fill="#c4c4c4"/><rect x="3.4" y="11.25" width="2.8" height="1.2" fill="#c9c9c9"/><rect x="0.2" y="14.80" width="1.4" height="1.2" fill="#c4c4c4"/><rect x="3.4" y="14.80" width="2.8" height="1.2" fill="#c9c9c9"/><rect x="0.2" y="18.35" width="1.4" height="1.2" fill="#c4c4c4"/><rect x="3.4" y="18.35" width="2.8" height="1.2" fill="#c9c9c9"/></svg>
<svg style="left:1180px;top:69.5px" width="7" height="20" viewBox="0 0 7 20"><rect x="0.2" y="0.60" width="1.4" height="1.2" fill="#c4c4c4"/><rect x="3.4" y="0.60" width="2.8" height="1.2" fill="#c9c9c9"/><rect x="0.2" y="4.15" width="1.4" height="1.2" fill="#c4c4c4"/><rect x="3.4" y="4.15" width="2.8" height="1.2" fill="#c9c9c9"/><rect x="0.2" y="7.70" width="1.4" height="1.2" fill="#c4c4c4"/><rect x="3.4" y="7.70" width="2.8" height="1.2" fill="#c9c9c9"/><rect x="0.2" y="11.25" width="1.4" height="1.2" fill="#c4c4c4"/><rect x="3.4" y="11.25" width="2.8" height="1.2" fill="#c9c9c9"/><rect x="0.2" y="14.80" width="1.4" height="1.2" fill="#c4c4c4"/><rect x="3.4" y="14.80" width="2.8" height="1.2" fill="#c9c9c9"/><rect x="0.2" y="18.35" width="1.4" height="1.2" fill="#c4c4c4"/><rect x="3.4" y="18.35" width="2.8" height="1.2" fill="#c9c9c9"/></svg>
<svg style="left:18.700000000000003px;top:63px" width="32" height="32" viewBox="0 0 32 32"><path d="M4.5 2.5H19.5L25.5 8.5V29.5H4.5Z" fill="url(#idoc)" stroke="#2a2a2a" stroke-width="1.1"/><path d="M19.5 2.5V8.5H25.5Z" fill="#e8e8e8" stroke="#2a2a2a" stroke-width="0.9"/><circle cx="21.5" cy="22.5" r="7" fill="#f8f8f8" stroke="#444" stroke-width="0.9"/><path d="M21.5 17.5V27.5M16.5 22.5H26.5" stroke="#2d5d06" stroke-width="3.2"/><path d="M21.5 18V27M17 22.5H26" stroke="#7ed321" stroke-width="1.8"/></svg>
<svg style="left:57px;top:63px" width="32" height="32" viewBox="0 0 32 32"><path d="M3.5 6.5H6.5V27H3.5Z" fill="#2f62a6" stroke="#1b3f73" stroke-width="0.9"/><path d="M7.5 2.8H21L26 7.8V20H7.5Z" fill="#fdfdfd" stroke="#333" stroke-width="0.9"/><path d="M21 2.8V7.8H26" fill="#ddd" stroke="#333" stroke-width="0.8"/><path d="M3.5 29.5V17.5H9.5L12 19.5 15.5 16.5 20 19 29.5 17V29.5Z" fill="url(#ifold)" stroke="#1b3f73" stroke-width="1"/><path d="M26.5 7.5V17.5H29.5V7.5Z" fill="#2f62a6" stroke="#1b3f73" stroke-width="0.8"/><path d="M9 19.5Q9.5 9.5 19.5 9V5.5L27.5 12.5 19.5 19.5V15.5Q14 15.5 12.5 19.5Q11 17 9 19.5Z" fill="#5cb81c" stroke="#2d6908" stroke-width="0.9"/><path d="M10.5 16Q12 10.8 19.5 10.2" fill="none" stroke="#b4ee70" stroke-width="1"/></svg>
<svg style="left:97px;top:63px" width="32" height="32" viewBox="0 0 32 32"><path d="M4 3.5H24L28 7.5V28.5H4Z" fill="#aeb0ac" stroke="#555753" stroke-width="1.2" stroke-linejoin="round"/><rect x="11" y="4.5" width="12" height="8" fill="#f4f4f4" stroke="#555753" stroke-width="0.8"/><rect x="18" y="5.8" width="3.2" height="5.4" fill="#333"/><rect x="7" y="16.5" width="18" height="12" rx="1" fill="#d6d8d4" stroke="#666" stroke-width="0.8"/><path d="M9 19H23M9 21.2H23" stroke="#aaa" stroke-width="0.8"/><rect x="9.5" y="23" width="13" height="3.6" rx="1.2" fill="#5c8fd6" stroke="#3465a4" stroke-width="0.7"/></svg>
<svg style="left:153px;top:63px" width="32" height="32" viewBox="0 0 32 32"><path d="M2.5 11.5L13.5 2.5V8Q27.5 8 28.5 20Q28.8 26 24 30.5Q27 20 13.5 16.5V21Z" fill="url(#iy)" stroke="#3a3000" stroke-width="1" stroke-linejoin="round"/><path d="M5 11.5L12.5 5.2V9.2Q24 9.5 26.8 17" fill="none" stroke="#fffbd0" stroke-width="1.1"/><path d="M19 29.2H30M20 29.5H29L24.5 34.5Z" fill="#8a8a8a" stroke="#8a8a8a" stroke-width="0.6"/></svg>
<svg style="left:192.7px;top:63px" width="32" height="32" viewBox="0 0 32 32"><g transform="translate(32 0) scale(-1 1)"><path d="M2.5 11.5L13.5 2.5V8Q27.5 8 28.5 20Q28.8 26 24 30.5Q27 20 13.5 16.5V21Z" fill="url(#igy)" stroke="#8a8a8a" stroke-width="1" stroke-linejoin="round"/><path d="M5 11.5L12.5 5.2V9.2Q24 9.5 26.8 17" fill="none" stroke="#f4f4f4" stroke-width="1.1"/></g><path d="M19 29.2H30M20 29.5H29L24.5 34.5Z" fill="#9a9a9a" stroke="#9a9a9a" stroke-width="0.6"/></svg>
<svg style="left:244px;top:63px" width="32" height="32" viewBox="0 0 32 32"><path d="M4.5 14.5Q5 4.5 16 4.5Q20.5 4.5 23.5 7L26.5 3.5 28 15 17 13.5 20.5 10.5Q18.5 9 16 9Q10 9 9.5 15Z" fill="url(#igy)" stroke="#8a8a8a" stroke-width="0.9"/><path d="M27.5 17.5Q27 27.5 16 27.5Q11.5 27.5 8.5 25L5.5 28.5 4 17 15 18.5 11.5 21.5Q13.5 23 16 23Q22 23 22.5 17Z" fill="url(#igy)" stroke="#8a8a8a" stroke-width="0.9"/></svg>
<svg style="left:528.7px;top:63px" width="32" height="32" viewBox="0 0 32 32"><path d="M17.5 19L20.5 16.5 30 26.5 27 29.5Z" fill="url(#ic)" stroke="#0a6a72" stroke-width="1"/><circle cx="12" cy="12" r="9.6" fill="#12b9be" stroke="#0a6a72" stroke-width="1"/><circle cx="12" cy="12" r="7.2" fill="url(#ic)" stroke="#0a6a72" stroke-width="0.8"/><rect x="9.6" y="9.6" width="4.8" height="4.8" fill="#19c3c8" stroke="#0a6a72" stroke-width="0.8"/><path d="M12 4.6L14.6 8.4H9.4ZM12 19.4L14.6 15.6H9.4ZM4.6 12L8.4 9.4V14.6ZM19.4 12L15.6 9.4V14.6Z" fill="#f2f2f2" stroke="#0a6a72" stroke-width="0.7"/></svg>
<svg style="left:568.7px;top:63px" width="32" height="32" viewBox="0 0 32 32"><path d="M17.5 19L20.5 16.5 30 26.5 27 29.5Z" fill="url(#ic)" stroke="#0a6a72" stroke-width="1"/><circle cx="12" cy="12" r="9.6" fill="#12b9be" stroke="#0a6a72" stroke-width="1"/><circle cx="12" cy="12" r="7.2" fill="url(#ic)" stroke="#0a6a72" stroke-width="0.8"/><path d="M6.8 17.2L14 10 11.6 7.8 18.2 6.2 16.6 12.6 14.6 10.8 7.6 18Z" fill="#f2f2f2" stroke="#333" stroke-width="0.8"/></svg>
<svg style="left:608.7px;top:63px" width="32" height="32" viewBox="0 0 32 32"><path d="M16 2.8L29 9V23L16 29.4 3 23V9Z" fill="#e8fbfb" fill-opacity="0.5" stroke="#0a6a72" stroke-width="3.4" stroke-linejoin="round"/><path d="M16 2.8L29 9V23L16 29.4 3 23V9Z" fill="none" stroke="#28d8dc" stroke-width="1.8" stroke-linejoin="round"/><path d="M3 9L16 15.4 29 9M16 15.4V29.4" fill="none" stroke="#0a6a72" stroke-width="3.2"/><path d="M3 9L16 15.4 29 9M16 15.4V29.4" fill="none" stroke="#28d8dc" stroke-width="1.6"/><path d="M16 7V12M8 21L11 20M24 21L21 20" stroke="#0a6a72" stroke-width="1.8" stroke-linecap="round"/></svg>
<svg style="left:665px;top:63px" width="32" height="32" viewBox="0 0 32 32"><path d="M10.5 3L28.5 5.5V19.5L10.5 18.5Z" fill="url(#ic)" stroke="#0a6a72" stroke-width="1"/><path d="M17.5 13.5L9 22.5" stroke="#0a6a72" stroke-width="3"/><path d="M17.5 13.5L9 22.5" stroke="#35e0e2" stroke-width="1.4" stroke-dasharray="3 1.6"/><path d="M3.5 28.5L6 20.5 12.5 26Z" fill="url(#ic)" stroke="#0a6a72" stroke-width="1"/><ellipse cx="19" cy="11.6" rx="2.2" ry="1.2" transform="rotate(-45 19 11.6)" fill="#d8f8f8" stroke="#0a6a72" stroke-width="0.8"/></svg>
<svg style="left:717px;top:63px" width="32" height="32" viewBox="0 0 32 32"><path d="M16 2.5L29.5 9V23L16 29.5 2.5 23V9Z" fill="url(#ic)" stroke="#0a6a72" stroke-width="1.1"/><path d="M16 4.5L27.5 10V15L16 20.5 4.5 15V10Z" fill="#5cecee" opacity="0.55"/><circle cx="16" cy="16" r="9.2" fill="none" stroke="#5c0000" stroke-width="4.2"/><circle cx="16" cy="16" r="9.2" fill="none" stroke="#e01b1b" stroke-width="2.8"/><path d="M9.8 9.8L22.2 22.2" stroke="#5c0000" stroke-width="4.2"/><path d="M9.8 9.8L22.2 22.2" stroke="#e01b1b" stroke-width="2.8"/></svg>
<svg style="left:772.7px;top:63px" width="32" height="32" viewBox="0 0 32 32"><path d="M3.5 9.5L12 4 28 6.5V20.5L19.5 28.5 3.5 24.5Z" fill="#bff4f5" fill-opacity="0.65" stroke="#0a6a72" stroke-width="3.4" stroke-linejoin="round"/><path d="M3.5 9.5L12 4 28 6.5V20.5L19.5 28.5 3.5 24.5Z" fill="none" stroke="#2fd6da" stroke-width="1.7" stroke-linejoin="round"/><path d="M3.5 9.5L19.5 13.5 28 6.5M19.5 13.5V28.5" fill="none" stroke="#0a6a72" stroke-width="3.2"/><path d="M3.5 9.5L19.5 13.5 28 6.5M19.5 13.5V28.5" fill="none" stroke="#2fd6da" stroke-width="1.6"/><path d="M12 4V17.5L3.5 24.5M12 17.5L28 20.5" fill="none" stroke="#1aa6ab" stroke-width="1.4"/><path d="M8.5 13.5L21 25 15.8 24.8 18.6 30 16.2 31 13.6 25.6 9.8 28.8Z" fill="#f4f4f4" stroke="#222" stroke-width="1"/></svg>
<svg style="left:828.7px;top:63px" width="32" height="32" viewBox="0 0 32 32"><path d="M17.5 19L20.5 16.5 30 26.5 27 29.5Z" fill="url(#ic)" stroke="#0a6a72" stroke-width="1"/><circle cx="12" cy="12" r="9.6" fill="#12b9be" stroke="#0a6a72" stroke-width="1"/><circle cx="12" cy="12" r="7.2" fill="url(#ic)" stroke="#0a6a72" stroke-width="0.8"/><path d="M6.8 11.2Q7.6 6.6 12.4 6.8L14.4 7.4 15.6 5.8 16.8 10.8 11.8 10.4 13.2 9Q10 8.2 9 11.4Z" fill="#dff6f6" stroke="#0a8a90" stroke-width="0.6"/><path d="M17.2 12.8Q16.4 17.4 11.6 17.2L9.6 16.6 8.4 18.2 7.2 13.2 12.2 13.6 10.8 15Q14 15.8 15 12.6Z" fill="#dff6f6" stroke="#0a8a90" stroke-width="0.6"/></svg>
<svg style="left:885px;top:63px" width="32" height="32" viewBox="0 0 32 32"><path d="M5 7.5L7 5.5H16.5V3.5H19V5.5H22V3.5H25.5V9H19.5V29H13.5V12H10V9.5H5Z" fill="#b5b7b3" stroke="#555753" stroke-width="1"/><path d="M19.5 13H27L22.5 15.5H19.5ZM19.5 17.5H26L22 19.5H19.5Z" fill="#c8cac6" stroke="#555753" stroke-width="0.8"/><path d="M15.5 15V27M16.5 17H18M16.5 19.5H18M16.5 22H18M16.5 24.5H18" stroke="#666" stroke-width="0.8"/></svg>
<svg style="left:942px;top:63px" width="32" height="32" viewBox="0 0 32 32"><path d="M5 10.5L13.5 4.5 20 7V14L27 16.5V24.5L18.5 30.5 5 26.5Z" fill="#f0de3c" stroke="#3a3400" stroke-width="1.1" stroke-linejoin="round"/><path d="M5 10.5L11.5 12.8 20 7M11.5 12.8V20.2M5 18.2L11.5 20.2 18.5 22.5 27 16.5M18.5 22.5V30.5M11.5 20.2L14 14.8 20 14" fill="none" stroke="#3a3400" stroke-width="0.9"/><path d="M5 10.5L11.5 12.8V20.2L5 18.2Z M5 18.2L18.5 22.5V30.5L5 26.5Z" fill="#d9c21a" opacity="0.75"/><path d="M6 11.6L10.6 13.3V19M6 19.6L17.6 23.2V29.2" fill="none" stroke="#fff59a" stroke-width="0.8"/></svg>
<svg style="left:981.8px;top:63px" width="32" height="32" viewBox="0 0 32 32"><path d="M2.5 4.5Q2.5 3.5 3.5 3.5H12.5L14.5 6.5H28.5Q29.5 6.5 29.5 7.5V10H2.5Z" fill="#2a5aa2" stroke="#173a70" stroke-width="1"/><path d="M2.5 9.5H13L15 7.5H29.5V28.5Q29.5 29.5 28.5 29.5H3.5Q2.5 29.5 2.5 28.5Z" fill="url(#ifold)" stroke="#173a70" stroke-width="1.1"/><path d="M3.6 10.6H13.4L15.4 8.6H28.4" fill="none" stroke="#a8c6ec" stroke-width="0.8"/></svg>
<svg style="left:1022px;top:63px" width="32" height="32" viewBox="0 0 32 32"><path d="M14 4.5H8.5Q4 4.5 4 9V24Q4 28.5 8.5 28.5H22Q26.5 28.5 26.5 24V20.5" fill="none" stroke="#173a70" stroke-width="4.6" stroke-linecap="round"/><path d="M14 4.5H8.5Q4 4.5 4 9V24Q4 28.5 8.5 28.5H22Q26.5 28.5 26.5 24V20.5" fill="none" stroke="#4a7fc4" stroke-width="2.6" stroke-linecap="round"/><path d="M11.5 21.5Q11 10 20.5 9.5V5L30 12 20.5 19V14.8Q15 15 14.5 21.5Q13 20 11.5 21.5Z" fill="#5cb81c" stroke="#245406" stroke-width="1"/><path d="M13 17Q14.4 11.2 20.5 10.8" fill="none" stroke="#b4ee70" stroke-width="1"/></svg>
<svg style="left:1078px;top:63px" width="32" height="32" viewBox="0 0 32 32"><path d="M12.5 4Q8 4 8 8V12Q8 16 4.5 16Q8 16 8 20V24Q8 28 12.5 28M19.5 4Q24 4 24 8V12Q24 16 27.5 16Q24 16 24 20V24Q24 28 19.5 28" fill="none" stroke="#2a2e30" stroke-width="4.4" stroke-linecap="round" stroke-linejoin="round"/><path d="M12.5 4Q8 4 8 8V12Q8 16 4.5 16Q8 16 8 20V24Q8 28 12.5 28M19.5 4Q24 4 24 8V12Q24 16 27.5 16Q24 16 24 20V24Q24 28 19.5 28" fill="none" stroke="#f4f4f4" stroke-width="2" stroke-linecap="round" stroke-linejoin="round"/></svg>
<svg style="left:1134px;top:63px" width="32" height="32" viewBox="0 0 32 32"><path d="M2.5 3L20 17.5 13.5 18.5 17.5 29 14.5 30.5 9.5 20.5 5 25Z" fill="#7d807b" stroke="#3a3c39" stroke-width="1"/><path d="M17.5 9.5Q18 3.5 23.5 3.5Q29.5 4 29 9.5Q28.5 13 24.5 15.5Q23.5 16.5 23.5 20" fill="none" stroke="#1c4680" stroke-width="3.6" stroke-linecap="round"/><path d="M17.5 9.5Q18 3.5 23.5 3.5Q29.5 4 29 9.5Q28.5 13 24.5 15.5Q23.5 16.5 23.5 20" fill="none" stroke="#5b8fd6" stroke-width="1.8" stroke-linecap="round"/><circle cx="23.5" cy="26.5" r="2.3" fill="#5b8fd6" stroke="#1c4680" stroke-width="1"/></svg>
<div class="b" style="left:1188px;top:59.3px;width:40px;height:40px;background:linear-gradient(#d9d9d9,#ebebeb);border:1px solid #c3c3c3;border-radius:4px;"></div>
<div class="b" style="left:1230.3px;top:59.3px;width:40px;height:40px;background:linear-gradient(#d9d9d9,#ebebeb);border:1px solid #c3c3c3;border-radius:4px;"></div>
<div class="b" style="left:1272.8px;top:59.3px;width:40px;height:40px;background:linear-gradient(#d9d9d9,#ebebeb);border:1px solid #c3c3c3;border-radius:4px;"></div>
<div class="b" style="left:1315.2px;top:59.3px;width:40px;height:40px;background:linear-gradient(#d9d9d9,#ebebeb);border:1px solid #c3c3c3;border-radius:4px;"></div>
<div class="b" style="left:1398px;top:59.3px;width:40px;height:40px;background:linear-gradient(#d9d9d9,#ebebeb);border:1px solid #c3c3c3;border-radius:4px;"></div>
<svg style="left:1192px;top:63px" width="32" height="32" viewBox="0 0 32 32"><path d="M9.5 15V10.5Q9.5 4 16 4Q22.5 4 22.5 10.5V15" fill="none" stroke="#0a6a72" stroke-width="5"/><path d="M9.5 15V10.5Q9.5 4 16 4Q22.5 4 22.5 10.5V15" fill="none" stroke="#2fd9dc" stroke-width="3"/><rect x="6.5" y="14.5" width="19" height="14.5" fill="url(#ic)" stroke="#0a6a72" stroke-width="1.1"/><path d="M7.5 18H24.5M7.5 21.5H24.5M7.5 25H24.5" stroke="#0e9ca2" stroke-width="1.2"/></svg>
<svg style="left:1234.4px;top:63px" width="32" height="32" viewBox="0 0 32 32"><path d="M10 21.5L26 4.5 30 8.5 13.5 25Z" fill="url(#ic)" stroke="#0a6a72" stroke-width="1"/><circle cx="8.5" cy="23.5" r="6" fill="url(#ic)" stroke="#0a6a72" stroke-width="1"/></svg>
<svg style="left:1277px;top:63px" width="32" height="32" viewBox="0 0 32 32"><path d="M3 26.5L26.5 3.5 30.5 7.5 7 30.5Z" fill="url(#ic)" stroke="#0a6a72" stroke-width="1"/><circle cx="16.5" cy="17" r="6.8" fill="url(#ic)" stroke="#0a6a72" stroke-width="1"/><path d="M12.6 12.4L21.6 21.6" stroke="none"/></svg>
<svg style="left:1319.4px;top:63px" width="32" height="32" viewBox="0 0 32 32"><circle cx="16" cy="16" r="13.4" fill="url(#ic)" stroke="#0a6a72" stroke-width="1"/><circle cx="16" cy="16" r="8.6" fill="#e4e4e4" stroke="#0a6a72" stroke-width="1"/><circle cx="16" cy="16" r="5" fill="url(#ic)" stroke="#0a6a72" stroke-width="1"/></svg>
<svg style="left:1360px;top:63px" width="32" height="32" viewBox="0 0 32 32"><path d="M16 6L26.5 16 16 26 5.5 16Z" fill="none" stroke="#0a6a72" stroke-width="3.2"/><path d="M16 6L26.5 16 16 26 5.5 16Z" fill="none" stroke="#2fd9dc" stroke-width="1.4"/><circle cx="16" cy="6" r="4.4" fill="url(#ic)" stroke="#0a6a72" stroke-width="1"/><circle cx="26.5" cy="16" r="4.4" fill="url(#ic)" stroke="#0a6a72" stroke-width="1"/><circle cx="16" cy="26" r="4.4" fill="url(#ic)" stroke="#0a6a72" stroke-width="1"/><circle cx="5.5" cy="16" r="4.4" fill="url(#ic)" stroke="#0a6a72" stroke-width="1"/></svg>
<svg style="left:1402px;top:63px" width="32" height="32" viewBox="0 0 32 32"><path d="M7 3.5L16 12.5 25 3.5 29 7.5 20 16.5 29 25.5 25 29.5 16 20.5 7 29.5 3 25.5 12 16.5 3 7.5Z" fill="url(#ic)" stroke="#0a6a72" stroke-width="1"/></svg>
<svg style="left:1443px;top:63px" width="32" height="32" viewBox="0 0 32 32"><path d="M13.5 5.5H18.5V20.5H29.5V25.5H2.5V20.5H13.5Z" fill="url(#ic)" stroke="#0a6a72" stroke-width="1"/></svg>
<svg style="left:1483px;top:63px" width="32" height="32" viewBox="0 0 32 32"><circle cx="6.5" cy="16.5" r="3.3" fill="url(#ic)" stroke="#0a6a72" stroke-width="1"/><circle cx="16" cy="16.5" r="3.3" fill="url(#ic)" stroke="#0a6a72" stroke-width="1"/><circle cx="25.5" cy="16.5" r="3.3" fill="url(#ic)" stroke="#0a6a72" stroke-width="1"/></svg>
<svg style="left:1523px;top:63px" width="32" height="32" viewBox="0 0 32 32"><path d="M10.5 3L30 14.5 27.5 18.5 8 7Z M4.5 13.5L24 25 21.5 29 2 17.5Z" fill="url(#ic)" stroke="#0a6a72" stroke-width="1"/></svg>
<svg style="left:1563px;top:63px" width="32" height="32" viewBox="0 0 32 32"><path d="M9 9.5L15 3.5H28.5V17L22.5 23.5H9Z" fill="url(#ic)" stroke="#0a6a72" stroke-width="1"/><path d="M9 9.5H22.5V23.5M22.5 9.5L28.5 3.5" fill="none" stroke="#0a6a72" stroke-width="0.9"/><path d="M22.5 9.5L28.5 3.5V17L22.5 23.5Z" fill="#0e9ca2" opacity="0.6"/><circle cx="7.5" cy="23.5" r="5.6" fill="url(#ic)" stroke="#0a6a72" stroke-width="1"/></svg>
<svg style="left:1601px;top:63px" width="32" height="32" viewBox="0 0 32 32"><path d="M3 15.5L5.5 11.5 24.5 22 22 26Z" fill="url(#ic)" stroke="#0a6a72" stroke-width="1"/><circle cx="21" cy="7.5" r="4.4" fill="url(#ic)" stroke="#0a6a72" stroke-width="1"/></svg>
<svg style="left:1642.7px;top:63px" width="32" height="32" viewBox="0 0 32 32"><path d="M13.7 5.5H18.7V13.5H26.5V18.5H18.7V26H13.7V18.5H6V13.5H13.7Z" fill="url(#ic)" stroke="#0a6a72" stroke-width="1"/></svg>
<svg style="left:1683px;top:63px" width="32" height="32" viewBox="0 0 32 32"><path d="M10 3.5V28.5M22 3.5V28.5M3.5 10H28.5M3.5 22H28.5" stroke="#0a6a72" stroke-width="4.4" stroke-linecap="round"/><path d="M10 3.5V28.5M22 3.5V28.5M3.5 10H28.5M3.5 22H28.5" stroke="#2fd9dc" stroke-width="2.4" stroke-linecap="round"/></svg>
<svg style="left:1723px;top:63px" width="32" height="32" viewBox="0 0 32 32"><rect x="2.5" y="2.5" width="27" height="27" rx="1.5" fill="url(#ic)" stroke="#0a6a72" stroke-width="1.1"/><circle cx="11" cy="20" r="4.2" fill="#2fd9dc" stroke="#0a6a72" stroke-width="1"/></svg>
<svg style="left:1763px;top:63px" width="32" height="32" viewBox="0 0 32 32"><path d="M11.5 27.5V15.5H26.5V21" fill="none" stroke="#0a6a72" stroke-width="4" stroke-linecap="round"/><path d="M11.5 27.5V15.5H26.5V21" fill="none" stroke="#2fd9dc" stroke-width="2" stroke-linecap="round"/><path d="M11.5 27.5H16" stroke="#0a6a72" stroke-width="4" stroke-linecap="round"/><path d="M11.5 27.5H16" stroke="#2fd9dc" stroke-width="2" stroke-linecap="round"/><circle cx="11.5" cy="15.5" r="2.3" fill="#2fd9dc" stroke="#0a6a72" stroke-width="0.9"/><circle cx="26.5" cy="15.5" r="2.3" fill="#2fd9dc" stroke="#0a6a72" stroke-width="0.9"/><circle cx="11.5" cy="27.5" r="2.3" fill="#2fd9dc" stroke="#0a6a72" stroke-width="0.9"/><path d="M17.5 3.5L23.5 11.5M23.5 3.5L17.5 11.5" stroke="#0a6a72" stroke-width="3"/><path d="M17.5 3.5L23.5 11.5M23.5 3.5L17.5 11.5" stroke="#2fd9dc" stroke-width="1.3"/><path d="M1.5 17L4.5 21.5 7.5 17M4.5 21.5V26" fill="none" stroke="#0a6a72" stroke-width="3"/><path d="M1.5 17L4.5 21.5 7.5 17M4.5 21.5V26" fill="none" stroke="#2fd9dc" stroke-width="1.3"/></svg>
<svg style="left:1803px;top:63px" width="32" height="32" viewBox="0 0 32 32"><path d="M7.5 3.5V28.5M16 3.5V28.5M24.5 3.5V28.5M3.5 7.5H28.5M3.5 16H28.5M3.5 24.5H28.5" stroke="#2a2e30" stroke-width="4" stroke-linecap="round"/><path d="M7.5 3.5V28.5M16 3.5V28.5M24.5 3.5V28.5M3.5 7.5H28.5M3.5 16H28.5M3.5 24.5H28.5" stroke="#fafafa" stroke-width="1.9" stroke-linecap="round"/></svg>
<div class="b" style="left:234px;top:68px;width:2.2px;height:24px;background:#8f8f8f;"></div>
<div class="b" style="left:706.4px;top:68px;width:2.2px;height:24px;background:#8f8f8f;"></div>
<svg style="left:644px;top:75.6px" width="12" height="8" viewBox="0 0 12 8"><path d="M0.5 0.8H11.5" stroke="#bdbdbd" stroke-width="1.2"/><path d="M1.5 1.4H10.5L6 6.4Z" fill="#8c8c8c"/></svg>
<svg style="left:752px;top:75.6px" width="12" height="8" viewBox="0 0 12 8"><path d="M0.5 0.8H11.5" stroke="#bdbdbd" stroke-width="1.2"/><path d="M1.5 1.4H10.5L6 6.4Z" fill="#8c8c8c"/></svg>
<svg style="left:808.4px;top:75.6px" width="12" height="8" viewBox="0 0 12 8"><path d="M0.5 0.8H11.5" stroke="#bdbdbd" stroke-width="1.2"/><path d="M1.5 1.4H10.5L6 6.4Z" fill="#8c8c8c"/></svg>
<svg style="left:864px;top:75.6px" width="12" height="8" viewBox="0 0 12 8"><path d="M0.5 0.8H11.5" stroke="#bdbdbd" stroke-width="1.2"/><path d="M1.5 1.4H10.5L6 6.4Z" fill="#8c8c8c"/></svg>
<svg style="left:1057px;top:75.6px" width="12" height="8" viewBox="0 0 12 8"><path d="M0.5 0.8H11.5" stroke="#bdbdbd" stroke-width="1.2"/><path d="M1.5 1.4H10.5L6 6.4Z" fill="#8c8c8c"/></svg>
<div class="b" style="left:298px;top:64px;width:210.3px;height:30.7px;background:linear-gradient(#ffffff,#f0f0f0);border:1px solid #adadad;border-radius:3px;"></div>
<svg style="left:304px;top:72px" width="20" height="15" viewBox="0 0 20 15"><path d="M2 7Q1.5 2.5 6 2Q9 0.5 12 1.5Q17 1 17.5 5L19 6 17 8Q17.5 12 13 12.5Q9 14 5.5 12.5Q1.5 12 2 7Z" fill="#4f7f2a"/><path d="M4 6Q6 3 10 3.5Q14 3 15 6Q14 9 10 9.5Q6 10 4 6Z" fill="#5f9234" opacity="0.8"/><circle cx="9.3" cy="8.6" r="1.1" fill="#111"/><path d="M17 7L19.4 7.6 17.4 8.6Z" fill="#d9a21a"/></svg>
<svg style="left:486.3px;top:76.8px" width="9" height="5.4" viewBox="0 0 12 6"><path d="M0.5 0.5H11.5L6 5.8Z" fill="#8c8c8c"/></svg>
<div class="t" id="quetzal" style="left:331.3px;top:72.43px;font-size:16.5px;line-height:16.5px;font-family:'Liberation Sans',sans-serif;color:#000;letter-spacing:-0.497px;">Quetzal</div>
<svg style="left:6px;top:117.0px" width="7" height="20" viewBox="0 0 7 20"><rect x="0.2" y="0.60" width="1.4" height="1.2" fill="#c4c4c4"/><rect x="3.4" y="0.60" width="2.8" height="1.2" fill="#c9c9c9"/><rect x="0.2" y="4.15" width="1.4" height="1.2" fill="#c4c4c4"/><rect x="3.4" y="4.15" width="2.8" height="1.2" fill="#c9c9c9"/><rect x="0.2" y="7.70" width="1.4" height="1.2" fill="#c4c4c4"/><rect x="3.4" y="7.70" width="2.8" height="1.2" fill="#c9c9c9"/><rect x="0.2" y="11.25" width="1.4" height="1.2" fill="#c4c4c4"/><rect x="3.4" y="11.25" width="2.8" height="1.2" fill="#c9c9c9"/><rect x="0.2" y="14.80" width="1.4" height="1.2" fill="#c4c4c4"/><rect x="3.4" y="14.80" width="2.8" height="1.2" fill="#c9c9c9"/><rect x="0.2" y="18.35" width="1.4" height="1.2" fill="#c4c4c4"/><rect x="3.4" y="18.35" width="2.8" height="1.2" fill="#c9c9c9"/></svg>
<svg style="left:1142px;top:117.0px" width="7" height="20" viewBox="0 0 7 20"><rect x="0.2" y="0.60" width="1.4" height="1.2" fill="#c4c4c4"/><rect x="3.4" y="0.60" width="2.8" height="1.2" fill="#c9c9c9"/><rect x="0.2" y="4.15" width="1.4" height="1.2" fill="#c4c4c4"/><rect x="3.4" y="4.15" width="2.8" height="1.2" fill="#c9c9c9"/><rect x="0.2" y="7.70" width="1.4" height="1.2" fill="#c4c4c4"/><rect x="3.4" y="7.70" width="2.8" height="1.2" fill="#c9c9c9"/><rect x="0.2" y="11.25" width="1.4" height="1.2" fill="#c4c4c4"/><rect x="3.4" y="11.25" width="2.8" height="1.2" fill="#c9c9c9"/><rect x="0.2" y="14.80" width="1.4" height="1.2" fill="#c4c4c4"/><rect x="3.4" y="14.80" width="2.8" height="1.2" fill="#c9c9c9"/><rect x="0.2" y="18.35" width="1.4" height="1.2" fill="#c4c4c4"/><rect x="3.4" y="18.35" width="2.8" height="1.2" fill="#c9c9c9"/></svg>
<svg style="left:1798px;top:117.0px" width="7" height="20" viewBox="0 0 7 20"><rect x="0.2" y="0.60" width="1.4" height="1.2" fill="#c4c4c4"/><rect x="3.4" y="0.60" width="2.8" height="1.2" fill="#c9c9c9"/><rect x="0.2" y="4.15" width="1.4" height="1.2" fill="#c4c4c4"/><rect x="3.4" y="4.15" width="2.8" height="1.2" fill="#c9c9c9"/><rect x="0.2" y="7.70" width="1.4" height="1.2" fill="#c4c4c4"/><rect x="3.4" y="7.70" width="2.8" height="1.2" fill="#c9c9c9"/><rect x="0.2" y="11.25" width="1.4" height="1.2" fill="#c4c4c4"/><rect x="3.4" y="11.25" width="2.8" height="1.2" fill="#c9c9c9"/><rect x="0.2" y="14.80" width="1.4" height="1.2" fill="#c4c4c4"/><rect x="3.4" y="14.80" width="2.8" height="1.2" fill="#c9c9c9"/><rect x="0.2" y="18.35" width="1.4" height="1.2" fill="#c4c4c4"/><rect x="3.4" y="18.35" width="2.8" height="1.2" fill="#c9c9c9"/></svg>
<svg style="left:17px;top:110.5px" width="32" height="32" viewBox="0 0 32 32"><circle cx="10.5" cy="11.9" r="7.4" fill="#4d84c8" stroke="#2c5a9c" stroke-width="0.9"/><circle cx="10.5" cy="11.9" r="3.9" fill="#79a3da"/><circle cx="10.5" cy="11.9" r="2.4" fill="#f2f5fa"/><path d="M10.5 2.5V21.3M1.0999999999999996 11.9H19.9" stroke="#777" stroke-width="1"/><path d="M12.2 25.6L21.75 15.8 29 19.5 19.9 29.2Z" fill="none" stroke="#e01b24" stroke-width="2.1" stroke-linejoin="miter"/><path d="M14.5 17.5L20 19.6 19.2 17 24.2 21.2 18.4 23.4 19.4 21.4 13.8 19.4Z" fill="#f3cf1c" stroke="#c49a00" stroke-width="0.5"/></svg>
<svg style="left:57px;top:110.5px" width="32" height="32" viewBox="0 0 32 32"><path d="M4.25 4.4H16.75Q17 15.6 28 15.6V28.1Q5 27.5 4.25 4.4Z" fill="url(#ib)" stroke="#2c5a9c" stroke-width="0.9"/><path d="M14.25 2V31M2 19H31" stroke="#3a3f48" stroke-width="1" stroke-dasharray="3.2 1.2 1 1.2"/></svg>
<svg style="left:100px;top:110.5px" width="32" height="32" viewBox="0 0 32 32"><path d="M16.5 2.5H25V30H16.5V20H7.5V12.5H16.5Z" fill="url(#ib)" stroke="#2c5a9c" stroke-width="0.9"/><path d="M20.75 1.5V31.5" stroke="#3a3f48" stroke-width="1" stroke-dasharray="3.2 1.2 1 1.2"/></svg>
<svg style="left:137px;top:110.5px" width="32" height="32" viewBox="0 0 32 32"><path d="M2.5 6.5L28.5 10.5V22.5L2.5 26.5Z" fill="url(#ib)" stroke="#2c5a9c" stroke-width="0.9"/><path d="M0.5 16.5H31.5" stroke="#3a3f48" stroke-width="1" stroke-dasharray="3.2 1.2 1 1.2"/></svg>
<svg style="left:177px;top:110.5px" width="32" height="32" viewBox="0 0 32 32"><path d="M9 4.5H13Q24.5 6 24.5 16.5Q24.5 27 13 28.5H9Z" fill="url(#ib)" stroke="#2c5a9c" stroke-width="0.9"/><path d="M1 16.5H31" stroke="#3a3f48" stroke-width="1" stroke-dasharray="3.2 1.2 1 1.2"/></svg>
<svg style="left:217px;top:110.5px" width="32" height="32" viewBox="0 0 32 32"><path d="M11.5 6.5H20.5V10.5H28V22.5H20.5V26.5H11.5V22.5H4.5V10.5H11.5Z" fill="url(#ib)" stroke="#2c5a9c" stroke-width="0.9"/><path d="M1 16.5H31" stroke="#3a3f48" stroke-width="1" stroke-dasharray="3.2 1.2 1 1.2"/></svg>
<svg style="left:257px;top:110.5px" width="32" height="32" viewBox="0 0 32 32"><path d="M4.5 5V28.5L16 16.5ZM27.5 5V28.5L16 16.5Z" fill="url(#ib)" stroke="#2c5a9c" stroke-width="0.9"/><path d="M1 16.5H31" stroke="#3a3f48" stroke-width="1" stroke-dasharray="3.2 1.2 1 1.2"/></svg>
<svg style="left:297px;top:110.5px" width="32" height="32" viewBox="0 0 32 32"><circle cx="16" cy="16.5" r="12.6" fill="url(#ib)" stroke="#2c5a9c" stroke-width="0.9"/><circle cx="16" cy="16.5" r="5.6" fill="#6b97d0"/><circle cx="16" cy="16.5" r="3.8" fill="#fff"/><circle cx="16" cy="7.5" r="1.6" fill="#9aa3ad"/><circle cx="16" cy="25.5" r="1.6" fill="#9aa3ad"/><circle cx="7" cy="16.5" r="1.6" fill="#9aa3ad"/><circle cx="25" cy="16.5" r="1.6" fill="#9aa3ad"/><path d="M16 2V31M1.5 16.5H30.5" stroke="#3a3f48" stroke-width="1" stroke-dasharray="3.2 1.2 1 1.2"/></svg>
<svg style="left:337px;top:110.5px" width="32" height="32" viewBox="0 0 32 32"><circle cx="16" cy="16.5" r="11.6" fill="none" stroke="#0c8a0c" stroke-width="1.8"/><circle cx="16" cy="16.5" r="9.8" fill="none" stroke="#555" stroke-width="2"/><path d="M16 2V31M1.5 16.5H30.5" stroke="#3a3f48" stroke-width="1" stroke-dasharray="3.2 1.2 1 1.2"/></svg>
<svg style="left:377px;top:110.5px" width="32" height="32" viewBox="0 0 32 32"><path d="M1 19H31V31.5H1Z" fill="#6f9bd4"/><path d="M11 19V8H21V19" fill="#6f9bd4" stroke="#0f2752" stroke-width="2"/><path d="M1 19H10M22 19H31" stroke="#2f5f9e" stroke-width="1.6"/></svg>
<svg style="left:417px;top:110.5px" width="32" height="32" viewBox="0 0 32 32"><path d="M5 27.5V15.5Q5 5 16 5Q27 5 27 15.5V27.5H23.5V15.5Q23.5 8.5 16 8.5Q8.5 8.5 8.5 15.5V27.5Z" fill="url(#ib)" stroke="#2c5a9c" stroke-width="0.9"/><path d="M16 2V31M1.5 16.5H30.5" stroke="#3a3f48" stroke-width="1" stroke-dasharray="3.2 1.2 1 1.2"/></svg>
<svg style="left:457px;top:110.5px" width="32" height="32" viewBox="0 0 32 32"><path d="M18.5 2H27.5V30H18.5Z" fill="url(#ib)" stroke="#2c5a9c" stroke-width="0.9"/><path d="M2.5 29.5Q2 15 18.5 10.5V18.5Q10.5 20 10.5 29.5Z" fill="url(#ib)" stroke="#2c5a9c" stroke-width="0.9"/><path d="M23 2.5V30M6.5 29Q7 17.5 18 14" fill="none" stroke="#2a4f86" stroke-width="1" stroke-dasharray="3 1.5"/></svg>
<svg style="left:497px;top:110.5px" width="32" height="32" viewBox="0 0 32 32"><path d="M13.5 2H19.5V8H13.5Z" fill="#1f4f8f" stroke="#0f2752" stroke-width="1"/><circle cx="16.5" cy="16.5" r="8.8" fill="#3d78c2" stroke="#0f2752" stroke-width="1.3"/><path d="M16.5 12V17.5" stroke="#2a4f86" stroke-width="1" stroke-dasharray="1.5 1.5"/></svg>
<svg style="left:537px;top:110.5px" width="32" height="32" viewBox="0 0 32 32"><path d="M9.5 4.5H23.5V29.5H9.5Z" fill="url(#ib)" stroke="#2c5a9c" stroke-width="0.9"/><path d="M23.5 8H27.5V5H30.5V15H27.5V12H23.5ZM9.5 21.5H5.5V18.5H2.5V29.5H5.5V25.5H9.5Z" fill="url(#ib)" stroke="#2c5a9c" stroke-width="0.9"/></svg>
<svg style="left:577px;top:110.5px" width="32" height="32" viewBox="0 0 32 32"><path d="M4.5 8.5H10.5V7H15.5V10.5H27.5V23H15.5V26.5H10.5V25H4.5Z" fill="url(#ib)" stroke="#2c5a9c" stroke-width="0.9"/><path d="M16.5 12H26V21.5H16.5Z" fill="#2f5f9e" opacity="0.55"/><path d="M1.5 16.5H31" stroke="#3a3f48" stroke-width="1" stroke-dasharray="3.2 1.2 1 1.2"/></svg>
<svg style="left:617px;top:110.5px" width="32" height="32" viewBox="0 0 32 32"><ellipse cx="6.5" cy="14" rx="5" ry="8.2" fill="none" stroke="#3f78c2" stroke-width="1.6"/><ellipse cx="6.5" cy="14" rx="2.6" ry="5.2" fill="none" stroke="#3f78c2" stroke-width="1.2"/><path d="M6.5 14L19.5 5.5 26 27" fill="none" stroke="#e01b24" stroke-width="2.6" stroke-linejoin="round"/><circle cx="6.5" cy="14" r="2.2" fill="#e01b24"/><circle cx="26" cy="27" r="2.2" fill="#e01b24"/></svg>
<svg style="left:657px;top:110.5px" width="32" height="32" viewBox="0 0 32 32"><rect x="2" y="2" width="26" height="28" fill="#3f6fb4"/><ellipse cx="15" cy="9.5" rx="10.5" ry="7.2" fill="#ff3434"/><ellipse cx="15" cy="23" rx="10.5" ry="7.2" fill="#ff3434"/><path d="M9 12H21V21H9Z" fill="#ff3434"/><path d="M0.5 16.5H29.5" stroke="#8a8f8a" stroke-width="1.8" stroke-dasharray="5 1.2 1.2 1.2"/></svg>
<svg style="left:697px;top:110.5px" width="32" height="32" viewBox="0 0 32 32"><path d="M4.5 7.5Q8 5.5 12 7.5V25.5Q8 27.5 4.5 25.5Q2.5 16.5 4.5 7.5Z" fill="url(#ib2)"/><ellipse cx="12" cy="16.5" rx="2" ry="9" fill="#ff3434"/><path d="M18.5 7.5Q23 5.5 27.5 7.5Q29.5 16.5 27.5 25.5Q23 27.5 18.5 25.5Q16.5 16.5 18.5 7.5Z" fill="url(#ib2)"/><path d="M4.5 7.5Q8 5.5 12 7.5Q13.6 16.5 12 25.5Q8 27.5 4.5 25.5Q2.5 16.5 4.5 7.5Z" fill="url(#ib2)"/><path d="M12.2 7.6Q14.2 16.5 12.2 25.4" fill="none" stroke="#ff3434" stroke-width="1.4"/></svg>
<svg style="left:737px;top:110.5px" width="32" height="32" viewBox="0 0 32 32"><g fill="none" stroke="#3f78c2" stroke-width="1.2"><ellipse cx="8" cy="4" rx="3.6" ry="1.8"/><path d="M4.4 4V12M11.6 4V12"/><ellipse cx="8" cy="12" rx="3.6" ry="1.8"/><path d="M2.4 15.5Q2.4 13.5 6 13.5Q9.6 13.5 9.6 15.5V20M2.4 15.5V22Q2.4 29.5 10 29.5H18.5M9.6 20Q9.6 23 13 23H18.5"/><ellipse cx="6" cy="19.5" rx="3.6" ry="1.6"/><ellipse cx="18.5" cy="26.2" rx="1.6" ry="3.3"/><ellipse cx="11.5" cy="25.5" rx="1.8" ry="3.4" transform="rotate(-40 11.5 25.5)"/><path d="M21.5 20.5H29M21.5 27.5H29"/><ellipse cx="21.5" cy="24" rx="1.8" ry="3.5"/><path d="M29 20.5Q31 24 29 27.5"/></g></svg>
<svg style="left:776.5px;top:110.5px" width="32" height="32" viewBox="0 0 32 32"><path d="M10.5 2L21 17M21.5 2L11 17" stroke="#888" stroke-width="0.7" stroke-dasharray="2 1"/><g transform="rotate(35 8 22)"><rect x="4.8" y="15.5" width="6.4" height="13" rx="3.2" fill="#cfe0f4" stroke="#4f82c6" stroke-width="1"/></g><g transform="rotate(-48 25 20)"><rect x="21.8" y="13" width="6.4" height="14" rx="3.2" fill="#cfe0f4" stroke="#4f82c6" stroke-width="1"/></g><path d="M6.5 11.5L10 5.5" stroke="#e8c21a" stroke-width="3.2" stroke-linecap="round"/><path d="M21.5 5.5L26 9.5" stroke="#e8c21a" stroke-width="3.2" stroke-linecap="round"/></svg>
<svg style="left:817px;top:110.5px" width="32" height="32" viewBox="0 0 32 32"><path d="M10.5 2L21 17M21.5 2L11 17" stroke="#888" stroke-width="0.7" stroke-dasharray="2 1"/><g transform="rotate(35 8 22)"><rect x="4.8" y="15.5" width="6.4" height="13" rx="3.2" fill="#cfe0f4" stroke="#4f82c6" stroke-width="1"/></g><g transform="rotate(-48 25 20)"><rect x="21.8" y="13" width="6.4" height="14" rx="3.2" fill="#cfe0f4" stroke="#4f82c6" stroke-width="1"/></g><path d="M21 4L29 10.5" stroke="#c49a00" stroke-width="4.6" stroke-linecap="round"/><path d="M21 4L29 10.5" stroke="#f3cf1c" stroke-width="3" stroke-linecap="round"/></svg>
<svg style="left:857px;top:110.5px" width="32" height="32" viewBox="0 0 32 32"><path d="M13.5 3.5H26V29.5H13.5Z" fill="url(#ib)" stroke="#2c5a9c" stroke-width="0.9"/><path d="M5.5 6H15.5V10.5H5.5ZM5.5 14H15.5V18.5H5.5ZM5.5 22H15.5V26.5H5.5Z" fill="url(#ib)" stroke="#2c5a9c" stroke-width="0.9"/><path d="M1.5 8.2H21.5M1.5 16.2H21.5M1.5 24.2H21.5" stroke="#555" stroke-width="1.6"/><path d="M21 1.5V31" stroke="#555" stroke-width="1.6"/></svg>
<svg style="left:897px;top:110.5px" width="32" height="32" viewBox="0 0 32 32"><circle cx="16" cy="10.5" r="7.6" fill="#4d84c8" stroke="#2c5a9c" stroke-width="0.9"/><circle cx="16" cy="10.5" r="4.1" fill="#79a3da"/><circle cx="16" cy="10.5" r="2.6" fill="#f2f5fa"/><path d="M16 0.9000000000000004V20.1M6.4 10.5H25.6" stroke="#777" stroke-width="1"/><path d="M16 18V21" stroke="#777" stroke-width="1"/><path d="M12 21H20V24.5H23L16 29.5 9 24.5H12Z" fill="#fbd31c" stroke="#d9a800" stroke-width="0.5"/><path d="M3 30.5H29" stroke="#cc0000" stroke-width="2.2"/></svg>
<svg style="left:937px;top:110.5px" width="32" height="32" viewBox="0 0 32 32"><circle cx="16" cy="10.5" r="7.6" fill="#4d84c8" stroke="#2c5a9c" stroke-width="0.9"/><circle cx="16" cy="10.5" r="4.1" fill="#79a3da"/><circle cx="16" cy="10.5" r="2.6" fill="#f2f5fa"/><path d="M16 0.9000000000000004V20.1M6.4 10.5H25.6" stroke="#777" stroke-width="1"/><path d="M16 18V21" stroke="#777" stroke-width="1"/><path d="M12 29H20V25.5H23L16 20.5 9 25.5H12Z" fill="#fbd31c" stroke="#d9a800" stroke-width="0.5"/><path d="M3 30.5H29" stroke="#cc0000" stroke-width="2.2"/></svg>
<svg style="left:977px;top:110.5px" width="32" height="32" viewBox="0 0 32 32"><g transform="rotate(-40 16 17)"><rect x="6" y="13" width="20" height="8" rx="4" fill="#b8d0ee" stroke="#4f82c6" stroke-width="1"/><ellipse cx="11" cy="17" rx="2.6" ry="3.6" fill="#7ea6da" stroke="#4f82c6" stroke-width="0.8"/><path d="M3 17H29" stroke="#666" stroke-width="1.4"/></g><path d="M3 19H6V17L9.5 21.5 6 26V24H3Z M29 14H26V16L22.5 11.5 26 7V9H29Z" fill="#e8f0fa" stroke="#3f78c2" stroke-width="1"/></svg>
<svg style="left:1017px;top:110.5px" width="32" height="32" viewBox="0 0 32 32"><path d="M5.5 5L8 22.5M21.5 4.5L26.5 26" stroke="#555" stroke-width="2"/><path d="M5.5 5L8 22.5M21.5 4.5L26.5 26" stroke="#bbb" stroke-width="0.8"/><g transform="rotate(-55 15 15)"><rect x="5.5" y="11" width="19" height="8" rx="4" fill="#b8d0ee" stroke="#4f82c6" stroke-width="1"/><path d="M12 12.5V17.5M14 12.5V17.5M16 12.5V17.5" stroke="#666" stroke-width="0.9"/></g><circle cx="5.5" cy="5" r="3" fill="#ee1c24" stroke="#a00" stroke-width="0.5"/><circle cx="21.5" cy="4.5" r="3" fill="#ee1c24" stroke="#a00" stroke-width="0.5"/><circle cx="8" cy="22.5" r="3" fill="#ee1c24" stroke="#a00" stroke-width="0.5"/><circle cx="26.5" cy="26" r="3" fill="#ee1c24" stroke="#a00" stroke-width="0.5"/></svg>
<svg style="left:1057px;top:110.5px" width="32" height="32" viewBox="0 0 32 32"><path d="M3 9.5L9.5 3H29.5V23L22.5 30H3Z" fill="url(#ib)" stroke="#2c5a9c" stroke-width="1" stroke-linejoin="round"/><path d="M3 9.5H22.5V30M22.5 9.5L29.5 3" fill="none" stroke="#2c5a9c" stroke-width="0.9"/><path d="M22.5 9.5L29.5 3V23L22.5 30Z" fill="#2a5596" opacity="0.55"/><path d="M3 9.5L9.5 3H29.5L22.5 9.5Z" fill="#9cc0ea" opacity="0.6"/><path d="M10.6 13H14.8V17.8H19.6V22H14.8V26.8H10.6V22H5.8V17.8H10.6Z" fill="#e01020"/></svg>
<svg style="left:1097px;top:110.5px" width="32" height="32" viewBox="0 0 32 32"><path d="M2.5 3H12.5V7.32H9.0V25.68H12.5V30H2.5V25.68H6.0V7.32H2.5Z" fill="url(#ig)" stroke="#3f8a0c" stroke-width="0.8"/><path d="M20.5 8H14.5V24.5H20.5V22H17V10.5H20.5Z" fill="#35dfe2" stroke="#0e9ca2" stroke-width="0.8"/><path d="M21 12H23.6V15.7H28.9V12H31.5V22H28.9V18.3H23.6V22H21Z" fill="#e01b24" stroke="#a00" stroke-width="0.8"/></svg>
<svg style="left:1153px;top:110.5px" width="32" height="32" viewBox="0 0 32 32"><path d="M2 2H12.5V4.6H8.825V13.4H12.5V16H2V13.4H5.675V4.6H2Z" fill="url(#ig)" stroke="#3f8a0c" stroke-width="0.8"/><path d="M7.5 22L19 12.5 29.5 18.5 18.5 29Z" fill="none" stroke="#cc0a14" stroke-width="2.8"/><path d="M9.5 13.5L17.5 17 16.8 14.2 21.5 19 15 20.5 16.5 18.6 9 15.5Z" fill="#f3d01c" stroke="#c49a00" stroke-width="0.5"/></svg>
<svg style="left:1193px;top:110.5px" width="32" height="32" viewBox="0 0 32 32"><path d="M5.5 7H29V10H5.5Z" fill="#f5a030" stroke="#d07a00" stroke-width="0.6"/><path d="M11 17.5L19 8.5 21.5 10 13.5 19Z" fill="#f5a030" stroke="#d07a00" stroke-width="0.6"/><path d="M6.5 10H10.5V25.5H6.5ZM24.5 10H28.5V25.5H24.5Z" fill="url(#ib)" stroke="#2c5a9c" stroke-width="0.8"/><path d="M19 1.5H26V4.1H23.7V14.9H26V17.5H19V14.9H21.3V4.1H19Z" fill="url(#ig)" stroke="#3f8a0c" stroke-width="0.8"/><path d="M5 26.5H12L8.5 30.5ZM23 26.5H30L26.5 30.5Z" fill="#999" stroke="#777" stroke-width="0.6"/></svg>
<svg style="left:1233px;top:110.5px" width="32" height="32" viewBox="0 0 32 32"><path d="M2.5 3H12.5V7.32H9.0V25.68H12.5V30H2.5V25.68H6.0V7.32H2.5Z" fill="url(#ig)" stroke="#3f8a0c" stroke-width="0.8"/><path d="M20.5 8H14.5V24.5H20.5V22H17V10.5H20.5Z" fill="#35dfe2" stroke="#0e9ca2" stroke-width="0.8"/><path d="M21 12H23.6V15.7H28.9V12H31.5V22H28.9V18.3H23.6V22H21Z" fill="#e01b24" stroke="#a00" stroke-width="0.8"/></svg>
<svg style="left:1273px;top:110.5px" width="32" height="32" viewBox="0 0 32 32"><path d="M27.5 15.5Q27 3 16 3Q4.5 3.5 4.5 15Q5 26 16 27V20.5Q11 20 11 15Q11.5 9.5 16 9.5Q21 10 21 15.5H17.5L24.5 23 31.5 15.5Z" fill="url(#ib)" stroke="#2c5a9c" stroke-width="0.8"/><path d="M20.5 29.5H29.5V21Z" fill="none" stroke="#e01b24" stroke-width="2.2"/></svg>
<svg style="left:1313px;top:110.5px" width="32" height="32" viewBox="0 0 32 32"><path d="M4.5 15.5Q5.5 4 16 4Q26 4.5 27 13.5H30.5L24 21.5 17 13.5H20.5Q20 10 16 10Q11.5 10.5 11 15.5Z" fill="url(#ib)" stroke="#2c5a9c" stroke-width="0.8"/><path d="M5 26.5H30" stroke="#cc0a14" stroke-width="2.6"/></svg>
<svg style="left:1353px;top:110.5px" width="32" height="32" viewBox="0 0 32 32"><path d="M2.5 4H14.5V6.720000000000001H10.3V18.28H14.5V21H2.5V18.28H6.7V6.720000000000001H2.5Z" fill="url(#ig)" stroke="#3f8a0c" stroke-width="0.8"/><path d="M22.7 22V8H19.0L24.5 2L30.0 8H26.3V22Z" fill="url(#ib)" stroke="#2c5a9c" stroke-width="0.8"/><path d="M1 24H17V21L24 26 17 31V28H1Z" fill="url(#ib)" stroke="#2c5a9c" stroke-width="0.8"/></svg>
<svg style="left:1393px;top:110.5px" width="32" height="32" viewBox="0 0 32 32"><path d="M1.5 5H12.5V7.720000000000001H8.65V19.28H12.5V22H1.5V19.28H5.35V7.720000000000001H1.5Z" fill="url(#ig)" stroke="#3f8a0c" stroke-width="0.8"/><path d="M14 10Q19 5.5 24.5 8.5Q29 12 27.5 18H30L25 23.5 20.5 18H23.5Q24.5 14 21.5 12Q18.5 10.5 16 13Z" fill="url(#ib)" stroke="#2c5a9c" stroke-width="0.8"/><path d="M17.5 4V29" stroke="#e01b24" stroke-width="1.4"/><ellipse cx="17.5" cy="16.5" rx="5" ry="2.8" fill="none" stroke="#e01b24" stroke-width="1.4"/></svg>
<svg style="left:1433px;top:110.5px" width="32" height="32" viewBox="0 0 32 32"><path d="M1.5 11H12.5" stroke="#cc0a14" stroke-width="2"/><path d="M1.5 13.5H12.5V16.22H8.65V27.78H12.5V30.5H1.5V27.78H5.35V16.22H1.5Z" fill="url(#ig)" stroke="#3f8a0c" stroke-width="0.8"/><path d="M18.5 1.5H30" stroke="#cc0a14" stroke-width="2"/><path d="M19 4H30V6.720000000000001H26.15V18.28H30V21H19V18.28H22.85V6.720000000000001H19Z" fill="url(#ig)" stroke="#3f8a0c" stroke-width="0.8"/><path d="M14.600000000000001 26V13.5H12.0L15.8 7.5L19.6 13.5H17.0V26Z" fill="url(#ib)" stroke="#2c5a9c" stroke-width="0.8"/></svg>
<svg style="left:1473px;top:110.5px" width="32" height="32" viewBox="0 0 32 32"><path d="M2.5 2H27" stroke="#cc0a14" stroke-width="2.2"/><path d="M2.5 7.5H13.5" stroke="#cc0a14" stroke-width="2.2"/><path d="M1.5 11H14.5V14.04H9.95V26.96H14.5V30H1.5V26.96H6.05V14.04H1.5Z" fill="url(#ig)" stroke="#3f8a0c" stroke-width="0.8"/><path d="M20.8 30V11H16.6L23 5L29.4 11H25.2V30Z" fill="url(#ib)" stroke="#2c5a9c" stroke-width="0.8"/></svg>
<svg style="left:1513px;top:110.5px" width="32" height="32" viewBox="0 0 32 32"><path d="M2 2.5H29" stroke="#cc0a14" stroke-width="2.4"/><g transform="rotate(-32 11 13)"><path d="M5 5.5H16V8.1H12.15V18.9H16V21.5H5V18.9H8.85V8.1H5Z" fill="url(#ig)" stroke="#3f8a0c" stroke-width="0.8"/></g><path d="M10.5 21L17.5 16.5" stroke="#cc0a14" stroke-width="2"/><path d="M14.5 22Q17 28.5 22.5 27Q26 25.5 26 21H23L28.5 16.5 31.5 22.5H29Q29 29 22.5 30.5Q15.5 31 13 24Z" fill="url(#ib)" stroke="#2c5a9c" stroke-width="0.7"/></svg>
<svg style="left:1553px;top:110.5px" width="32" height="32" viewBox="0 0 32 32"><path d="M1 11H10.5" stroke="#cc0a14" stroke-width="2"/><path d="M1 13.5H10.5V16.22H7.175V27.78H10.5V30.5H1V27.78H4.325V16.22H1Z" fill="url(#ig)" stroke="#3f8a0c" stroke-width="0.8"/><path d="M20 1.5H30.5V4.1H26.825V14.9H30.5V17.5H20V14.9H23.675V4.1H20Z" fill="#35dfe2" stroke="#0e9ca2" stroke-width="0.8"/><path d="M11 6H21.5V8.6H17.825V19.4H21.5V22H11V19.4H14.675V8.6H11Z" fill="#35dfe2" stroke="#0e9ca2" stroke-width="0.8"/><path d="M14 21Q15.5 26.5 21 26Q25 25 25.5 20.5H29.5Q29.5 29.5 21 30.5Q13.5 30.5 12 24Z" fill="url(#ib)" stroke="#2c5a9c" stroke-width="0.7"/></svg>
<svg style="left:1593px;top:110.5px" width="32" height="32" viewBox="0 0 32 32"><path d="M2 16.5L11.5 5.5V11.5H20.5V5.5L30 16.5 20.5 27.5V21.5H11.5V27.5Z" fill="url(#ib)" stroke="#2c5a9c" stroke-width="0.9"/></svg>
<svg style="left:1633px;top:110.5px" width="32" height="32" viewBox="0 0 32 32"><path d="M4.5 8.5H11V30H4.5Z" fill="#7aa4da" stroke="#2c5a9c" stroke-width="0.9"/><g transform="rotate(-52 21 21)"><path d="M17.8 10H24.2V32H17.8Z" fill="#7aa4da" stroke="#2c5a9c" stroke-width="0.9"/></g><path d="M4 8H11.5" stroke="#ff4040" stroke-width="2"/><path d="M13.5 16L17.5 11.5" stroke="#ff4040" stroke-width="1.6"/><path d="M5 5.5L27.5 26.5" stroke="#e8b21a" stroke-width="1" stroke-dasharray="2.2 1.2"/><path d="M3 3.5L6 6.5M6 3L3.5 7" stroke="#e8b21a" stroke-width="0.9"/></svg>
<svg style="left:1673px;top:110.5px" width="32" height="32" viewBox="0 0 32 32"><path d="M2 3H30" stroke="#cc0a14" stroke-width="2.6"/><path d="M11.5 4V30" stroke="#cc0a14" stroke-width="3"/><path d="M2 5H9.5V30H2Z" fill="#3f6fb4"/><ellipse cx="6.6" cy="17.5" rx="6" ry="11.5" fill="#0c9a0c"/><rect x="15" y="5.5" width="14.5" height="8" fill="#5b8fd6" stroke="#2c5a9c" stroke-width="0.9"/><path d="M17 9.5H27.5M17 9.5L19.5 7.8M17 9.5L19.5 11.2M27.5 9.5L25 7.8M27.5 9.5L25 11.2" stroke="#0c9a0c" stroke-width="1" fill="none"/><path d="M19.5 17V27.5H29" fill="none" stroke="#cc0a14" stroke-width="3"/></svg>
<svg style="left:1713px;top:110.5px" width="32" height="32" viewBox="0 0 32 32"><path d="M2.5 3.5H21.5L27.5 9.5V19L24.5 21H16.5" fill="none" stroke="#a00a10" stroke-width="4.4" stroke-linejoin="miter"/><path d="M2.5 3.5H21.5L27.5 9.5V19L24.5 21H16.5" fill="none" stroke="#ee2028" stroke-width="3" stroke-linejoin="miter"/><path d="M2.5 3.5L9.5 10V29.5" fill="none" stroke="#a00a10" stroke-width="4.4" stroke-linecap="round"/><path d="M2.5 3.5L9.5 10V29.5" fill="none" stroke="#ee2028" stroke-width="3" stroke-linecap="round"/></svg>
<svg style="left:1753px;top:110.5px" width="32" height="32" viewBox="0 0 32 32"><path d="M23.0 11.0L22.6 14.8L20.1 14.2L18.9 16.8L21.0 18.3L18.3 21.0L16.8 18.9L14.2 20.1L14.9 22.6L11.1 23.0L11.3 20.4L8.5 19.6L7.4 22.0L4.2 19.8L6.1 18.0L4.4 15.6L2.0 16.7L1.0 13.0L3.6 12.8L3.9 9.8L1.4 9.2L3.0 5.7L5.1 7.2L7.2 5.1L5.7 3.0L9.1 1.4L9.8 3.9L12.7 3.6L12.9 1.0L16.6 2.0L15.5 4.4L17.9 6.0L19.8 4.2L22.0 7.3L19.6 8.4L20.4 11.3Z" fill="#4a4c4a" stroke="#222" stroke-width="0.8"/><circle cx="12" cy="12" r="6.4" fill="#8a8c88"/><circle cx="12" cy="12" r="3" fill="#f0f0f0" stroke="#333" stroke-width="0.8"/><rect x="14.5" y="10.5" width="15.5" height="20" fill="#eef2f8" stroke="#3f6fb4" stroke-width="1"/><rect x="16.5" y="13.5" width="11.5" height="3.2" rx="1.4" fill="#c9ccc8" stroke="#6a6c68" stroke-width="0.7"/><rect x="16.5" y="19" width="11.5" height="3.2" rx="1.4" fill="#c9ccc8" stroke="#6a6c68" stroke-width="0.7"/><rect x="16.5" y="24.5" width="11.5" height="3.2" rx="1.4" fill="#c9ccc8" stroke="#6a6c68" stroke-width="0.7"/></svg>
<svg style="left:1809px;top:111px" width="32" height="32" viewBox="0 0 32 32"><path d="M3 9.5L9.5 3H29.5V23L22.5 30H3Z" fill="url(#ib)" stroke="#2c5a9c" stroke-width="1" stroke-linejoin="round"/><path d="M3 9.5H22.5V30M22.5 9.5L29.5 3" fill="none" stroke="#2c5a9c" stroke-width="0.9"/><path d="M22.5 9.5L29.5 3V23L22.5 30Z" fill="#2a5596" opacity="0.55"/><path d="M3 9.5L9.5 3H29.5L22.5 9.5Z" fill="#9cc0ea" opacity="0.6"/></svg>
<svg style="left:1849px;top:111.3px" width="32" height="32" viewBox="0 0 32 32"><path d="M5.5 10.5Q5.5 2.5 16 2.5Q27 2.5 27 10.5Q27 15 21.5 18.5Q19 20 19 24H12Q12 18.5 16 15.5Q19.5 13 19.5 10.5Q19.5 8 16 8Q12.5 8 12.5 11.5Z" fill="#8c0000" stroke="#5a0000" stroke-width="0.6"/><path d="M11.5 26H19.5V31H11.5Z" fill="#8c0000" stroke="#5a0000" stroke-width="0.6"/></svg>
<svg style="left:1906px;top:123px" width="10" height="8" viewBox="0 0 10 8"><path d="M1 0.8L4 4 1 7.2M5.5 0.8L8.5 4 5.5 7.2" fill="none" stroke="#444" stroke-width="1.1"/></svg>
<svg id="model" style="left:0;top:0" width="1920" height="1030" viewBox="0 0 1920 1030">
<defs><linearGradient id="gc" x1="0" y1="0" x2="0" y2="1"><stop offset="0" stop-color="#1e2022"/><stop offset="0.03" stop-color="#3c4043"/><stop offset="0.08" stop-color="#575c60"/><stop offset="0.16" stop-color="#6d7277"/><stop offset="0.28" stop-color="#80868b"/><stop offset="0.42" stop-color="#8f959b"/><stop offset="0.55" stop-color="#969ca2"/><stop offset="0.66" stop-color="#959ba1"/><stop offset="0.78" stop-color="#8b9196"/><stop offset="0.85" stop-color="#82888d"/><stop offset="0.86" stop-color="#70757a"/><stop offset="0.92" stop-color="#5e6367"/><stop offset="0.97" stop-color="#44484b"/><stop offset="1" stop-color="#222426"/></linearGradient><linearGradient id="gb" x1="0" y1="0" x2="0" y2="1"><stop offset="0" stop-color="#0f2a66"/><stop offset="0.12" stop-color="#173a8a"/><stop offset="0.45" stop-color="#2150aa"/><stop offset="0.62" stop-color="#2557b4"/><stop offset="0.85" stop-color="#1a3f90"/><stop offset="1" stop-color="#0e2558"/></linearGradient><linearGradient id="gface" x1="0" y1="0" x2="1" y2="1"><stop offset="0" stop-color="#7d8388"/><stop offset="1" stop-color="#8f959a"/></linearGradient><linearGradient id="gbore" x1="0" y1="0" x2="1" y2="0.6"><stop offset="0" stop-color="#3e4246"/><stop offset="0.45" stop-color="#6b7075"/><stop offset="1" stop-color="#a4aaaf"/></linearGradient><linearGradient id="grim" x1="0" y1="0" x2="0" y2="1"><stop offset="0" stop-color="#5c6165"/><stop offset="0.15" stop-color="#858b90"/><stop offset="0.45" stop-color="#9ba1a7"/><stop offset="0.7" stop-color="#8a9095"/><stop offset="0.9" stop-color="#6a6f74"/><stop offset="1" stop-color="#45494d"/></linearGradient><linearGradient id="gred" x1="0" y1="0" x2="0" y2="1"><stop offset="0" stop-color="#45494d"/><stop offset="0.12" stop-color="#6f757a"/><stop offset="0.35" stop-color="#969ca2"/><stop offset="0.55" stop-color="#a6acb2"/><stop offset="0.72" stop-color="#9ba1a7"/><stop offset="0.88" stop-color="#7c8287"/><stop offset="1" stop-color="#4a4e52"/></linearGradient><linearGradient id="ghub" x1="0" y1="0" x2="0" y2="1"><stop offset="0" stop-color="#4e5256"/><stop offset="0.12" stop-color="#80868b"/><stop offset="0.38" stop-color="#b0b6bc"/><stop offset="0.6" stop-color="#a2a8ae"/><stop offset="0.85" stop-color="#787d82"/><stop offset="1" stop-color="#45494d"/></linearGradient></defs>
<defs><linearGradient id="gstem" x1="0" y1="0" x2="1" y2="0"><stop offset="0" stop-color="#6d7277"/><stop offset="0.35" stop-color="#a9aeb4"/><stop offset="0.7" stop-color="#92989d"/><stop offset="1" stop-color="#5a5e62"/></linearGradient><linearGradient id="grim2" x1="0" y1="0" x2="0" y2="1"><stop offset="0" stop-color="#55595d"/><stop offset="0.25" stop-color="#8a9095"/><stop offset="0.6" stop-color="#9ba1a6"/><stop offset="1" stop-color="#5a5e62"/></linearGradient><linearGradient id="ghub2" x1="0" y1="0" x2="0" y2="1"><stop offset="0" stop-color="#5a5e62"/><stop offset="0.2" stop-color="#8b9196"/><stop offset="0.42" stop-color="#b4bac0"/><stop offset="0.62" stop-color="#9da3a9"/><stop offset="0.85" stop-color="#767b80"/><stop offset="1" stop-color="#4a4e52"/></linearGradient><linearGradient id="gelb" x1="0" y1="0" x2="1" y2="0"><stop offset="0" stop-color="#5a5e62"/><stop offset="0.3" stop-color="#9aa0a5"/><stop offset="0.55" stop-color="#c4c9ce"/><stop offset="0.8" stop-color="#8b9196"/><stop offset="1" stop-color="#55595d"/></linearGradient></defs>
<clipPath id="vpclip"><rect x="463" y="150" width="1457" height="678"/></clipPath><g clip-path="url(#vpclip)">
<g transform="translate(1261 275.1) rotate(30)"><ellipse cx="-9" cy="0" rx="32.31" ry="56" fill="url(#grim2)" stroke="#151515" stroke-width="1.7"/><path d="M-9 -56L0 -56A32.31 56 0 0 0 0 56L-9 56A32.31 56 0 0 1 -9 -56Z" fill="url(#grim2)" stroke="#151515" stroke-width="1.7"/><ellipse cx="0" cy="0" rx="32.31" ry="56" fill="#858b90" stroke="#151515" stroke-width="1.7"/><ellipse cx="0" cy="46.3" rx="2.48" ry="4.3" fill="#a9aeb3" stroke="#151515" stroke-width="1.4"/><ellipse cx="13.36" cy="40.1" rx="2.48" ry="4.3" fill="#a9aeb3" stroke="#151515" stroke-width="1.4"/><ellipse cx="23.14" cy="23.15" rx="2.48" ry="4.3" fill="#a9aeb3" stroke="#151515" stroke-width="1.4"/><ellipse cx="26.72" cy="0" rx="2.48" ry="4.3" fill="#a9aeb3" stroke="#151515" stroke-width="1.4"/><ellipse cx="23.14" cy="-23.15" rx="2.48" ry="4.3" fill="#a9aeb3" stroke="#151515" stroke-width="1.4"/><ellipse cx="13.36" cy="-40.1" rx="2.48" ry="4.3" fill="#a9aeb3" stroke="#151515" stroke-width="1.4"/><ellipse cx="0" cy="-46.3" rx="2.48" ry="4.3" fill="#a9aeb3" stroke="#151515" stroke-width="1.4"/><ellipse cx="-13.36" cy="-40.1" rx="2.48" ry="4.3" fill="#a9aeb3" stroke="#151515" stroke-width="1.4"/><ellipse cx="-23.14" cy="-23.15" rx="2.48" ry="4.3" fill="#a9aeb3" stroke="#151515" stroke-width="1.4"/><ellipse cx="-26.72" cy="-0" rx="2.48" ry="4.3" fill="#a9aeb3" stroke="#151515" stroke-width="1.4"/><ellipse cx="-23.14" cy="23.15" rx="2.48" ry="4.3" fill="#a9aeb3" stroke="#151515" stroke-width="1.4"/><ellipse cx="-13.36" cy="40.1" rx="2.48" ry="4.3" fill="#a9aeb3" stroke="#151515" stroke-width="1.4"/><ellipse cx="0" cy="0" rx="20.77" ry="36" fill="#8d9398" stroke="#151515" stroke-width="1.53"/><ellipse cx="1.5" cy="0" rx="19.62" ry="34" fill="#8f959a" stroke="#151515" stroke-width="1.36"/><path d="M2 -33Q9 -27.5 17 -25.8L60 -25.8L60 25.8L17 25.8Q9 27.5 2 33A19.04 33 0 0 1 2 -33Z" fill="url(#ghub2)" stroke="#151515" stroke-width="1.6"/><path d="M17 -25.8A14.89 25.8 0 0 0 17 25.8" fill="none" stroke="#151515" stroke-width="1.53"/><path d="M19.5 -25.8A14.89 25.8 0 0 0 19.5 25.8" fill="none" stroke="#151515" stroke-width="1.36"/></g>
<path d="M1197.5 398V412Q1198.5 432 1216 444L1225 428Q1214.5 420 1214.5 408V398Z" fill="url(#gelb)" stroke="#151515" stroke-width="1.6"/>
<g transform="translate(671.5 680.7) rotate(-29.7)"><path d="M862.95 35.09L870.45 35.09A2.77 4.8 0 0 1 870.45 44.69L862.95 44.69Z" fill="#73787c" stroke="#151515" stroke-width="1.4"/><path d="M874.63 14.85L882.13 14.85A2.77 4.8 0 0 1 882.13 24.45L874.63 24.45Z" fill="#73787c" stroke="#151515" stroke-width="1.4"/><path d="M878.91 -12.8L886.41 -12.8A2.77 4.8 0 0 1 886.41 -3.2L878.91 -3.2Z" fill="#73787c" stroke="#151515" stroke-width="1.4"/><path d="M874.63 -40.45L882.13 -40.45A2.77 4.8 0 0 1 882.13 -30.85L874.63 -30.85Z" fill="#73787c" stroke="#151515" stroke-width="1.4"/><path d="M862.95 -60.69L870.45 -60.69A2.77 4.8 0 0 1 870.45 -51.09L862.95 -51.09Z" fill="#73787c" stroke="#151515" stroke-width="1.4"/><path d="M847 -68.1L854.5 -68.1A2.77 4.8 0 0 1 854.5 -58.5L847 -58.5Z" fill="#73787c" stroke="#151515" stroke-width="1.4"/><path d="M831 -73L847 -73A37.5 65 0 0 1 847 57L831 57A37.5 65 0 0 1 831 -73Z" fill="url(#grim)"/><path d="M831 -73L847 -73M831 57L847 57" fill="none" stroke="#2c2f32" stroke-width="0.7"/><path d="M847 -73A37.5 65 0 0 1 847 57M831 57A37.5 65 0 0 1 831 -73" fill="none" stroke="#151515" stroke-width="1.7"/><path d="M842 -73A37.5 65 0 0 1 842 57" fill="none" stroke="#151515" stroke-width="1.53"/><path d="M827 -70L831 -70A35.77 62 0 0 1 831 54L827 54A35.77 62 0 0 1 827 -70Z" fill="#6c7176"/><path d="M827 -70L831 -70M827 54L831 54" fill="none" stroke="#2c2f32" stroke-width="0.7"/><path d="M831 -70A35.77 62 0 0 1 831 54M827 54A35.77 62 0 0 1 827 -70" fill="none" stroke="#151515" stroke-width="1.7"/><path d="M813 -73L827 -73A37.5 65 0 0 1 827 57L813 57A37.5 65 0 0 1 813 -73Z" fill="url(#grim)"/><path d="M813 -73L827 -73M813 57L827 57" fill="none" stroke="#2c2f32" stroke-width="0.7"/><path d="M827 -73A37.5 65 0 0 1 827 57M813 57A37.5 65 0 0 1 813 -73" fill="none" stroke="#151515" stroke-width="1.7"/><path d="M824.5 -73A37.5 65 0 0 1 824.5 57" fill="none" stroke="#151515" stroke-width="1.36"/><ellipse cx="813" cy="-8" rx="37.5" ry="65" fill="#7c8186" stroke="#151515" stroke-width="1.7"/><ellipse cx="813" cy="-8" rx="36.06" ry="62.5" fill="#7c8186" stroke="#151515" stroke-width="1.19"/><path d="M821.45 -57.49L816.45 -57.49L816.45 -54.29L821.45 -54.29Z" fill="#6a6f73" stroke="#151515" stroke-width="1.1"/><path d="M829.45 -62.09L821.45 -62.09L821.45 -49.69L829.45 -49.69A3.58 6.2 0 0 0 829.45 -62.09Z" fill="#b2b6ba" stroke="#151515" stroke-width="1.3"/><path d="M825.58 -62.09L821.45 -62.09L821.45 -49.69L825.58 -49.69Z" fill="#64696d"/><ellipse cx="821.45" cy="-55.89" rx="3.58" ry="6.2" fill="#6c7175" stroke="#151515" stroke-width="1.3"/><ellipse cx="821.45" cy="-55.89" rx="1.79" ry="3.1" fill="#44484c" stroke="#151515" stroke-width="0.9"/><path d="M805.5 -64.9L800.5 -64.9L800.5 -61.7L805.5 -61.7Z" fill="#6a6f73" stroke="#151515" stroke-width="1.1"/><path d="M813.5 -69.5L805.5 -69.5L805.5 -57.1L813.5 -57.1A3.58 6.2 0 0 0 813.5 -69.5Z" fill="#b2b6ba" stroke="#151515" stroke-width="1.3"/><path d="M809.62 -69.5L805.5 -69.5L805.5 -57.1L809.62 -57.1Z" fill="#64696d"/><ellipse cx="805.5" cy="-63.3" rx="3.58" ry="6.2" fill="#6c7175" stroke="#151515" stroke-width="1.3"/><ellipse cx="805.5" cy="-63.3" rx="1.79" ry="3.1" fill="#44484c" stroke="#151515" stroke-width="0.9"/><path d="M789.55 -57.49L784.55 -57.49L784.55 -54.29L789.55 -54.29Z" fill="#6a6f73" stroke="#151515" stroke-width="1.1"/><path d="M797.55 -62.09L789.55 -62.09L789.55 -49.69L797.55 -49.69A3.58 6.2 0 0 0 797.55 -62.09Z" fill="#b2b6ba" stroke="#151515" stroke-width="1.3"/><path d="M793.67 -62.09L789.55 -62.09L789.55 -49.69L793.67 -49.69Z" fill="#64696d"/><ellipse cx="789.55" cy="-55.89" rx="3.58" ry="6.2" fill="#6c7175" stroke="#151515" stroke-width="1.3"/><ellipse cx="789.55" cy="-55.89" rx="1.79" ry="3.1" fill="#44484c" stroke="#151515" stroke-width="0.9"/><path d="M833.13 -37.25L828.13 -37.25L828.13 -34.05L833.13 -34.05Z" fill="#6a6f73" stroke="#151515" stroke-width="1.1"/><path d="M841.13 -41.85L833.13 -41.85L833.13 -29.45L841.13 -29.45A3.58 6.2 0 0 0 841.13 -41.85Z" fill="#b2b6ba" stroke="#151515" stroke-width="1.3"/><path d="M837.26 -41.85L833.13 -41.85L833.13 -29.45L837.26 -29.45Z" fill="#64696d"/><ellipse cx="833.13" cy="-35.65" rx="3.58" ry="6.2" fill="#6c7175" stroke="#151515" stroke-width="1.3"/><ellipse cx="833.13" cy="-35.65" rx="1.79" ry="3.1" fill="#44484c" stroke="#151515" stroke-width="0.9"/><path d="M837.41 -9.6L832.41 -9.6L832.41 -6.4L837.41 -6.4Z" fill="#6a6f73" stroke="#151515" stroke-width="1.1"/><path d="M845.41 -14.2L837.41 -14.2L837.41 -1.8L845.41 -1.8A3.58 6.2 0 0 0 845.41 -14.2Z" fill="#b2b6ba" stroke="#151515" stroke-width="1.3"/><path d="M841.53 -14.2L837.41 -14.2L837.41 -1.8L841.53 -1.8Z" fill="#64696d"/><ellipse cx="837.41" cy="-8" rx="3.58" ry="6.2" fill="#6c7175" stroke="#151515" stroke-width="1.3"/><ellipse cx="837.41" cy="-8" rx="1.79" ry="3.1" fill="#44484c" stroke="#151515" stroke-width="0.9"/><path d="M833.13 18.05L828.13 18.05L828.13 21.25L833.13 21.25Z" fill="#6a6f73" stroke="#151515" stroke-width="1.1"/><path d="M841.13 13.45L833.13 13.45L833.13 25.85L841.13 25.85A3.58 6.2 0 0 0 841.13 13.45Z" fill="#b2b6ba" stroke="#151515" stroke-width="1.3"/><path d="M837.26 13.45L833.13 13.45L833.13 25.85L837.26 25.85Z" fill="#64696d"/><ellipse cx="833.13" cy="19.65" rx="3.58" ry="6.2" fill="#6c7175" stroke="#151515" stroke-width="1.3"/><ellipse cx="833.13" cy="19.65" rx="1.79" ry="3.1" fill="#44484c" stroke="#151515" stroke-width="0.9"/><path d="M821.45 38.29L816.45 38.29L816.45 41.49L821.45 41.49Z" fill="#6a6f73" stroke="#151515" stroke-width="1.1"/><path d="M829.45 33.69L821.45 33.69L821.45 46.09L829.45 46.09A3.58 6.2 0 0 0 829.45 33.69Z" fill="#b2b6ba" stroke="#151515" stroke-width="1.3"/><path d="M825.58 33.69L821.45 33.69L821.45 46.09L825.58 46.09Z" fill="#64696d"/><ellipse cx="821.45" cy="39.89" rx="3.58" ry="6.2" fill="#6c7175" stroke="#151515" stroke-width="1.3"/><ellipse cx="821.45" cy="39.89" rx="1.79" ry="3.1" fill="#44484c" stroke="#151515" stroke-width="0.9"/><path d="M805.5 45.7L800.5 45.7L800.5 48.9L805.5 48.9Z" fill="#6a6f73" stroke="#151515" stroke-width="1.1"/><path d="M813.5 41.1L805.5 41.1L805.5 53.5L813.5 53.5A3.58 6.2 0 0 0 813.5 41.1Z" fill="#b2b6ba" stroke="#151515" stroke-width="1.3"/><path d="M809.62 41.1L805.5 41.1L805.5 53.5L809.62 53.5Z" fill="#64696d"/><ellipse cx="805.5" cy="47.3" rx="3.58" ry="6.2" fill="#6c7175" stroke="#151515" stroke-width="1.3"/><ellipse cx="805.5" cy="47.3" rx="1.79" ry="3.1" fill="#44484c" stroke="#151515" stroke-width="0.9"/><path d="M789.55 38.29L784.55 38.29L784.55 41.49L789.55 41.49Z" fill="#6a6f73" stroke="#151515" stroke-width="1.1"/><path d="M797.55 33.69L789.55 33.69L789.55 46.09L797.55 46.09A3.58 6.2 0 0 0 797.55 33.69Z" fill="#b2b6ba" stroke="#151515" stroke-width="1.3"/><path d="M793.67 33.69L789.55 33.69L789.55 46.09L793.67 46.09Z" fill="#64696d"/><ellipse cx="789.55" cy="39.89" rx="3.58" ry="6.2" fill="#6c7175" stroke="#151515" stroke-width="1.3"/><ellipse cx="789.55" cy="39.89" rx="1.79" ry="3.1" fill="#44484c" stroke="#151515" stroke-width="0.9"/><path d="M793 -41.11Q807 -41.61 813 -50A24.23 42 0 0 1 813 34Q807 25.53 793 25.03A19.08 33.07 0 0 1 793 -41.11Z" fill="url(#ghub)" stroke="#151515" stroke-width="1.7"/><path d="M810.5 -47.5A22.79 39.5 0 0 1 810.5 31.5" fill="none" stroke="#151515" stroke-width="1.36"/><path d="M227.8 -40.05L793 -41.11A19.08 33.07 0 0 1 793 25.03L227.8 29.67A20.11 34.86 0 0 1 227.8 -40.05Z" fill="url(#gc)"/><path d="M227.8 -40.05L793 -41.11M227.8 29.67L793 25.03" fill="none" stroke="#2c2f32" stroke-width="0.7"/><path d="M793 -41.11A19.08 33.07 0 0 1 793 25.03M227.8 29.67A20.11 34.86 0 0 1 227.8 -40.05" fill="none" stroke="#151515" stroke-width="1.7"/><path d="M793 -41.11A19.08 33.07 0 0 1 793 25.03" fill="none" stroke="#151515" stroke-width="1.7"/><path d="M790 -41.11A19.09 33.08 0 0 1 790 25.05" fill="none" stroke="#151515" stroke-width="1.36"/><path d="M700.5 -40.94A19.25 33.36 0 0 1 700.5 25.79" fill="none" stroke="#151515" stroke-width="1.7"/><path d="M239.08 19.56L713.98 16.11" stroke="#151515" stroke-width="1.7" fill="none"/><path d="M186.5 -25.5L227.8 -40A20.08 34.8 0 0 1 227.8 29.6L186.5 26.1A14.89 25.8 0 0 1 186.5 -25.5Z" fill="url(#gred)"/><path d="M186.5 -25.5L227.8 -40M186.5 26.1L227.8 29.6" fill="none" stroke="#2c2f32" stroke-width="0.7"/><path d="M227.8 -40A20.08 34.8 0 0 1 227.8 29.6M186.5 26.1A14.89 25.8 0 0 1 186.5 -25.5" fill="none" stroke="#151515" stroke-width="1.7"/><path d="M10 -25.5L186.5 -25.5A14.89 25.8 0 0 1 186.5 26.1L10 26.1A14.89 25.8 0 0 1 10 -25.5Z" fill="url(#gc)"/><path d="M10 -25.5L186.5 -25.5M10 26.1L186.5 26.1" fill="none" stroke="#2c2f32" stroke-width="0.7"/><path d="M186.5 -25.5A14.89 25.8 0 0 1 186.5 26.1M10 26.1A14.89 25.8 0 0 1 10 -25.5" fill="none" stroke="#151515" stroke-width="1.7"/><path d="M10 20.6L195.43 20.6" stroke="#151515" stroke-width="1.7" fill="none"/><path d="M-2.2 -55.3L11 -55.3A32.72 56.7 0 0 1 11 58.1L-2.2 58.1A32.72 56.7 0 0 1 -2.2 -55.3Z" fill="url(#grim)"/><path d="M-2.2 -55.3L11 -55.3M-2.2 58.1L11 58.1" fill="none" stroke="#2c2f32" stroke-width="0.7"/><path d="M11 -55.3A32.72 56.7 0 0 1 11 58.1M-2.2 58.1A32.72 56.7 0 0 1 -2.2 -55.3" fill="none" stroke="#151515" stroke-width="1.7"/><ellipse cx="-2.2" cy="1.4" rx="32.72" ry="56.7" fill="#858b90" stroke="#151515" stroke-width="1.7"/><ellipse cx="-2.2" cy="1.4" rx="21.64" ry="37.5" fill="#888e93" stroke="#151515" stroke-width="2.04"/><ellipse cx="-2.2" cy="1.4" rx="20.31" ry="35.2" fill="#888e93" stroke="#151515" stroke-width="1.36"/><ellipse cx="-2.2" cy="1.4" rx="14.42" ry="25" fill="url(#gbore)" stroke="#151515" stroke-width="2.04"/><path d="M-13.45 -14.1Q-1.2 -20.1 -0.04 -23.23" fill="none" stroke="#151515" stroke-width="1.3"/><ellipse cx="-2.2" cy="48.15" rx="2.42" ry="4.2" fill="#a9aeb3" stroke="#151515" stroke-width="1.4"/><ellipse cx="11.29" cy="41.89" rx="2.42" ry="4.2" fill="#a9aeb3" stroke="#151515" stroke-width="1.4"/><ellipse cx="21.16" cy="24.78" rx="2.42" ry="4.2" fill="#a9aeb3" stroke="#151515" stroke-width="1.4"/><ellipse cx="24.77" cy="1.4" rx="2.42" ry="4.2" fill="#a9aeb3" stroke="#151515" stroke-width="1.4"/><ellipse cx="21.16" cy="-21.97" rx="2.42" ry="4.2" fill="#a9aeb3" stroke="#151515" stroke-width="1.4"/><ellipse cx="11.29" cy="-39.09" rx="2.42" ry="4.2" fill="#a9aeb3" stroke="#151515" stroke-width="1.4"/><ellipse cx="-2.2" cy="-45.35" rx="2.42" ry="4.2" fill="#a9aeb3" stroke="#151515" stroke-width="1.4"/><ellipse cx="-15.69" cy="-39.09" rx="2.42" ry="4.2" fill="#a9aeb3" stroke="#151515" stroke-width="1.4"/><ellipse cx="-25.56" cy="-21.98" rx="2.42" ry="4.2" fill="#a9aeb3" stroke="#151515" stroke-width="1.4"/><ellipse cx="-29.17" cy="1.4" rx="2.42" ry="4.2" fill="#a9aeb3" stroke="#151515" stroke-width="1.4"/><ellipse cx="-25.56" cy="24.78" rx="2.42" ry="4.2" fill="#a9aeb3" stroke="#151515" stroke-width="1.4"/><ellipse cx="-15.69" cy="41.89" rx="2.42" ry="4.2" fill="#a9aeb3" stroke="#151515" stroke-width="1.4"/></g>
<path d="M1262.6 298.6Q1271 286.5 1285.7 277.6Q1294 272.5 1301.6 267.2L1308.5 272.4Z" fill="#72777c"/>
<path d="M1262.6 298.6Q1271 286.5 1285.7 277.6Q1294 272.5 1301.6 267.2" fill="none" stroke="#151515" stroke-width="1.6"/>
<path d="M1266.5 299Q1274 288.5 1288 280Q1296 275 1304.5 269.6" fill="none" stroke="#151515" stroke-width="1.1"/>
<g transform="translate(1230 440.7) rotate(30.4)"><path d="M0 -24.6L6 -24.6L6 24.6L0 24.6A14.19 24.6 0 0 1 0 -24.6Z" fill="url(#grim)" stroke="#151515" stroke-width="1.5"/><ellipse cx="6" cy="0" rx="14.19" ry="24.6" fill="#8b9196" stroke="#151515" stroke-width="1.5"/><path d="M6 -21L8.5 -21L8.5 21L6 21A12.12 21 0 0 1 6 -21Z" fill="#5a5e62" stroke="#151515" stroke-width="1.5"/><ellipse cx="8.5" cy="0" rx="12.12" ry="21" fill="#777c80" stroke="#151515" stroke-width="1.5"/><path d="M8.5 -24.6L13 -24.6L13 24.6L8.5 24.6A14.19 24.6 0 0 1 8.5 -24.6Z" fill="url(#grim)" stroke="#151515" stroke-width="1.5"/><ellipse cx="13" cy="0" rx="14.19" ry="24.6" fill="#8b9196" stroke="#151515" stroke-width="1.5"/><path d="M13 -25L19 -25L19 25L13 25A14.42 25 0 0 1 13 -25Z" fill="url(#gb)" stroke="#151515" stroke-width="1.5"/><ellipse cx="19" cy="0" rx="14.42" ry="25" fill="#1b449c" stroke="#151515" stroke-width="1.5"/><ellipse cx="17.81" cy="-19.32" rx="3" ry="3.9" fill="#15181c" stroke="#0a0a0a" stroke-width="0.6"/><ellipse cx="18.61" cy="-20.32" rx="1.2" ry="1.4" fill="#c8ccd0"/><ellipse cx="13.08" cy="-14.86" rx="3" ry="3.9" fill="#15181c" stroke="#0a0a0a" stroke-width="0.6"/><ellipse cx="13.88" cy="-15.86" rx="1.2" ry="1.4" fill="#c8ccd0"/><ellipse cx="9.96" cy="-6.84" rx="3" ry="3.9" fill="#15181c" stroke="#0a0a0a" stroke-width="0.6"/><ellipse cx="10.76" cy="-7.84" rx="1.2" ry="1.4" fill="#c8ccd0"/><ellipse cx="9.37" cy="2.78" rx="3" ry="3.9" fill="#15181c" stroke="#0a0a0a" stroke-width="0.6"/><ellipse cx="10.17" cy="1.78" rx="1.2" ry="1.4" fill="#c8ccd0"/><ellipse cx="11.35" cy="11.47" rx="3" ry="3.9" fill="#15181c" stroke="#0a0a0a" stroke-width="0.6"/><ellipse cx="12.15" cy="10.47" rx="1.2" ry="1.4" fill="#c8ccd0"/><ellipse cx="15.38" cy="17.66" rx="3" ry="3.9" fill="#15181c" stroke="#0a0a0a" stroke-width="0.6"/><ellipse cx="16.18" cy="16.66" rx="1.2" ry="1.4" fill="#c8ccd0"/><path d="M26 -23L60 -23L60 23L26 23A13.27 23 0 0 1 26 -23Z" fill="url(#gb)" stroke="#151515" stroke-width="1.5"/><ellipse cx="60" cy="0" rx="13.27" ry="23" fill="#1c47a0" stroke="#151515" stroke-width="1.5"/><path d="M60 -19L64 -19L64 19L60 19A10.96 19 0 0 1 60 -19Z" fill="#12307a" stroke="#151515" stroke-width="1.5"/><ellipse cx="64" cy="0" rx="10.96" ry="19" fill="#1a3f90" stroke="#151515" stroke-width="1.5"/><path d="M64 -22.5L70 -22.5L70 22.5L64 22.5A12.98 22.5 0 0 1 64 -22.5Z" fill="url(#gb)" stroke="#151515" stroke-width="1.5"/><ellipse cx="70" cy="0" rx="12.98" ry="22.5" fill="#1c47a0" stroke="#151515" stroke-width="1.5"/><path d="M70 -18.5L74 -18.5L74 18.5L70 18.5A10.67 18.5 0 0 1 70 -18.5Z" fill="#12307a" stroke="#151515" stroke-width="1.5"/><ellipse cx="74" cy="0" rx="10.67" ry="18.5" fill="#1a3f90" stroke="#151515" stroke-width="1.5"/><path d="M74 -22.5L82 -22.5L82 22.5L74 22.5A12.98 22.5 0 0 1 74 -22.5Z" fill="url(#gb)" stroke="#151515" stroke-width="1.5"/><ellipse cx="82" cy="0" rx="12.98" ry="22.5" fill="#1c47a0" stroke="#151515" stroke-width="1.5"/><path d="M82 -24.75L88 -24.75L88 24.75L82 24.75A14.28 24.75 0 0 1 82 -24.75Z" fill="url(#grim)" stroke="#151515" stroke-width="1.5"/><ellipse cx="88" cy="0" rx="14.28" ry="24.75" fill="#8b9196" stroke="#151515" stroke-width="1.5"/><path d="M88 -21L91 -21L91 21L88 21A12.12 21 0 0 1 88 -21Z" fill="#5a5e62" stroke="#151515" stroke-width="1.5"/><ellipse cx="91" cy="0" rx="12.12" ry="21" fill="#777c80" stroke="#151515" stroke-width="1.5"/><path d="M91 -24.75L99.4 -24.75L99.4 24.75L91 24.75A14.28 24.75 0 0 1 91 -24.75Z" fill="url(#grim)" stroke="#151515" stroke-width="1.5"/><ellipse cx="99.4" cy="0" rx="14.28" ry="24.75" fill="#8e9499" stroke="#151515" stroke-width="1.5"/><ellipse cx="104.66" cy="16.17" rx="3.3" ry="4.5" fill="#22262a" stroke="#0a0a0a" stroke-width="0.6"/><ellipse cx="105.86" cy="15.37" rx="1.2" ry="1.5" fill="#c4c8cc"/><ellipse cx="110.13" cy="6.7" rx="3.3" ry="4.5" fill="#22262a" stroke="#0a0a0a" stroke-width="0.6"/><ellipse cx="111.33" cy="5.9" rx="1.2" ry="1.5" fill="#c4c8cc"/><ellipse cx="110.13" cy="-6.7" rx="3.3" ry="4.5" fill="#22262a" stroke="#0a0a0a" stroke-width="0.6"/><ellipse cx="111.33" cy="-7.5" rx="1.2" ry="1.5" fill="#c4c8cc"/><ellipse cx="104.66" cy="-16.17" rx="3.3" ry="4.5" fill="#22262a" stroke="#0a0a0a" stroke-width="0.6"/><ellipse cx="105.86" cy="-16.97" rx="1.2" ry="1.5" fill="#c4c8cc"/><ellipse cx="96.94" cy="-16.17" rx="3.3" ry="4.5" fill="#22262a" stroke="#0a0a0a" stroke-width="0.6"/><ellipse cx="98.14" cy="-16.97" rx="1.2" ry="1.5" fill="#c4c8cc"/><ellipse cx="91.47" cy="-6.7" rx="3.3" ry="4.5" fill="#22262a" stroke="#0a0a0a" stroke-width="0.6"/><ellipse cx="92.67" cy="-7.5" rx="1.2" ry="1.5" fill="#c4c8cc"/><ellipse cx="91.47" cy="6.7" rx="3.3" ry="4.5" fill="#22262a" stroke="#0a0a0a" stroke-width="0.6"/><ellipse cx="92.67" cy="5.9" rx="1.2" ry="1.5" fill="#c4c8cc"/><ellipse cx="96.94" cy="16.17" rx="3.3" ry="4.5" fill="#22262a" stroke="#0a0a0a" stroke-width="0.6"/><ellipse cx="98.14" cy="15.37" rx="1.2" ry="1.5" fill="#c4c8cc"/><path d="M42 -32.6L111.4 -32.6L111.4 -24.4L56 -22.4L48 -22.4Z" fill="#1d4aa6" stroke="#151515" stroke-width="1.3"/><path d="M62 -24.2L111.4 -24.4L110.2 -21.2L84 -20.8Z" fill="#10296a" stroke="#151515" stroke-width="1"/><path d="M35.5 -21L38 -24 41 -22 39.5 -18.8Z" fill="#0c1c48" stroke="#151515" stroke-width="0.8"/></g>
<g transform="translate(764.8 534.4)"><path d="M-8.6 63V76Q0 81.5 8.6 76V63Z" fill="#8f959a" stroke="#151515" stroke-width="1.5"/><ellipse cx="0" cy="63.5" rx="8.6" ry="3.4" fill="#9aa0a5" stroke="#151515" stroke-width="1.5"/><path d="M-8.6 67.5Q0 72.5 8.6 67.5" fill="none" stroke="#151515" stroke-width="1.3"/><path d="M-4.8 36V65Q0 67 4.8 65V36Z" fill="url(#gstem)" stroke="#151515" stroke-width="1.5"/><path d="M11 9L13.76 10.5V19.5L17.6 22V39.5L11 35.5Z" fill="#1a3f8f" stroke="#151515" stroke-width="1.5"/><path d="M13.76 19.5V36.8" fill="none" stroke="#151515" stroke-width="1.2"/><path d="M-10.8 6V35L-3.65 38.6 7.35 37.6 11.2 34V5.5Z" fill="#1d4aa6" stroke="#151515" stroke-width="1.7"/><path d="M-10.8 6V35L-3.65 38.6V10Z" fill="#163a86"/><path d="M7.35 9V37.6L11.2 34V5.5Z" fill="#123070"/><path d="M-3.65 10V38.6M7.35 9V37.6" stroke="#151515" stroke-width="1.3" fill="none"/><path d="M-10.8 6.5Q-9.7 1.2 -2 0.4Q6.8 -0.4 11.2 2.4V6L7.35 9.4 -3.65 10.4Z" fill="#2454b4" stroke="#151515" stroke-width="1.7"/><ellipse cx="0.7" cy="5" rx="5.28" ry="2.1" fill="#1c45a0" stroke="#151515" stroke-width="1.5"/><ellipse cx="0.9" cy="5.2" rx="2.64" ry="0.9" fill="#2a5cc0"/></g>
<g transform="translate(1206.2 266)"><path d="M-8.6 63V76Q0 81.5 8.6 76V63Z" fill="#8f959a" stroke="#151515" stroke-width="1.5"/><ellipse cx="0" cy="63.5" rx="8.6" ry="3.4" fill="#9aa0a5" stroke="#151515" stroke-width="1.5"/><path d="M-8.6 67.5Q0 72.5 8.6 67.5" fill="none" stroke="#151515" stroke-width="1.3"/><path d="M-4.8 36V65Q0 67 4.8 65V36Z" fill="url(#gstem)" stroke="#151515" stroke-width="1.5"/><path d="M7.6 9L11.24 10.5V19.5L16.4 22V39.5L7.6 35.5Z" fill="#1a3f8f" stroke="#151515" stroke-width="1.5"/><path d="M11.24 19.5V36.8" fill="none" stroke="#151515" stroke-width="1.2"/><path d="M-10.4 6V35L-4.49 38.6 4.61 37.6 7.8 34V5.5Z" fill="#1d4aa6" stroke="#151515" stroke-width="1.7"/><path d="M-10.4 6V35L-4.49 38.6V10Z" fill="#163a86"/><path d="M4.61 9V37.6L7.8 34V5.5Z" fill="#123070"/><path d="M-4.49 10V38.6M4.61 9V37.6" stroke="#151515" stroke-width="1.3" fill="none"/><path d="M-10.4 6.5Q-9.49 1.2 -3.12 0.4Q4.16 -0.4 7.8 2.4V6L4.61 9.4 -4.49 10.4Z" fill="#2454b4" stroke="#151515" stroke-width="1.7"/><ellipse cx="-0.8" cy="5" rx="4.37" ry="2.1" fill="#1c45a0" stroke="#151515" stroke-width="1.5"/><ellipse cx="-0.6" cy="5.2" rx="2.18" ry="0.9" fill="#2a5cc0"/></g>
<g stroke-linejoin="round"><path d="M1847.8 156.8L1860.1 170.7H1835.7Z M1847.8 288.3L1860.1 275.2H1835.7Z M1782.1 222.8L1795.7 211.1V234.4Z M1913.9 222.8L1900.5 211.1V234.4Z" fill="#e2eff9" stroke="#4a525a" stroke-width="0.7"/><path d="M1829.6 164.3Q1813.9 168.5 1802.6 180L1800.6 177.2L1798.6 191.8L1812.4 187.1L1808.6 185.6Q1817 176 1831.6 171.8Z" fill="#e2eff9" stroke="#4a525a" stroke-width="0.7"/><path d="M1866.0 164.3Q1881.7 168.5 1893.0 180L1895.0 177.2L1897.0 191.8L1883.2 187.1L1887.0 185.6Q1878.6 176 1864.0 171.8Z" fill="#e2eff9" stroke="#4a525a" stroke-width="0.7"/><circle cx="1905.1" cy="165.3" r="6.6" fill="#e2eff9" stroke="#4a525a" stroke-width="0.7"/><path d="M1892.5 260.5L1902.5 265V276L1892.5 280 1882.5 276V265Z" fill="#e2eff9" stroke="#4a525a" stroke-width="0.7"/><path d="M1882.5 265L1892.5 269.5 1902.5 265M1892.5 269.5V280" fill="none" stroke="#222" stroke-width="0.8"/><path d="M1799 209.7V250.4" stroke="#3a3aff" stroke-width="1.8"/><path d="M1799 250.4L1835.4 230.1" stroke="#44ee44" stroke-width="1.6"/><path d="M1799 250.4L1835.4 272" stroke="#ff4a4a" stroke-width="1.6"/><path d="M1843 180.6H1853.2L1877.2 193.7 1887.4 207.5V238.8L1882.3 249 1857.5 262.8 1853.2 265H1843L1838.6 262.1 1813.1 246.8 1808 238.8V208.2L1818.2 193.7Z" fill="#e2eff9" fill-opacity="0.8" stroke="#4a525a" stroke-width="0.9"/><g fill="none" stroke="#30363c" stroke-width="0.8"><path d="M1819.7 193.7V200.2L1842.2 213.3H1853.2L1876.4 200.2V193.7"/><path d="M1842.2 213.3L1837.9 222.1 1842.2 231.5H1853.2L1858.3 222.1 1853.2 213.3"/><path d="M1842.2 231.5V258.4H1853.2V231.5M1842.2 258.4L1838.6 262.1M1853.2 258.4L1857.5 262.8"/><path d="M1819.7 200.2L1814.6 209.7 1808 208.2M1814.6 209.7L1837.9 222.1"/><path d="M1876.4 200.2L1881.5 209.7 1887.4 207.5M1881.5 209.7L1858.3 222.1"/></g><g fill="#8f99a3" font-family="'Liberation Sans',sans-serif" font-style="italic" font-size="10.5"><text transform="matrix(0.87 0.42 -0.5 0.87 1838.5 192.6)" letter-spacing="0.3">TOP</text><text transform="matrix(0.88 0.47 0 1 1810.5 228)" font-size="10">FRONT</text><text transform="matrix(0.88 -0.47 0 1 1856 246.5)" font-size="10">RIGHT</text></g></g><g font-family="'Liberation Sans',sans-serif" font-size="9" fill="#000"><path d="M1886.6 794.6V772.5" stroke="#15157a" stroke-width="1.2"/><path d="M1886.6 774.5L1888.8 780.6H1884.4Z" fill="#15157a"/><path d="M1886.7 794.6L1899.2 786.8" stroke="#137013" stroke-width="1.2"/><path d="M1899.6 786.5L1896.4 790.4 1894.6 787.4Z" fill="#137013"/><path d="M1886.7 794.6L1905.2 805" stroke="#701414" stroke-width="1.2"/><path d="M1905.6 805.2L1897.4 804 1899.4 799.6Z" fill="#701414"/><text x="1887.8" y="770.8">Z</text><text x="1901.2" y="784.8">Y</text><text x="1906.6" y="805">X</text></g>
</g></svg>
</body></html>
